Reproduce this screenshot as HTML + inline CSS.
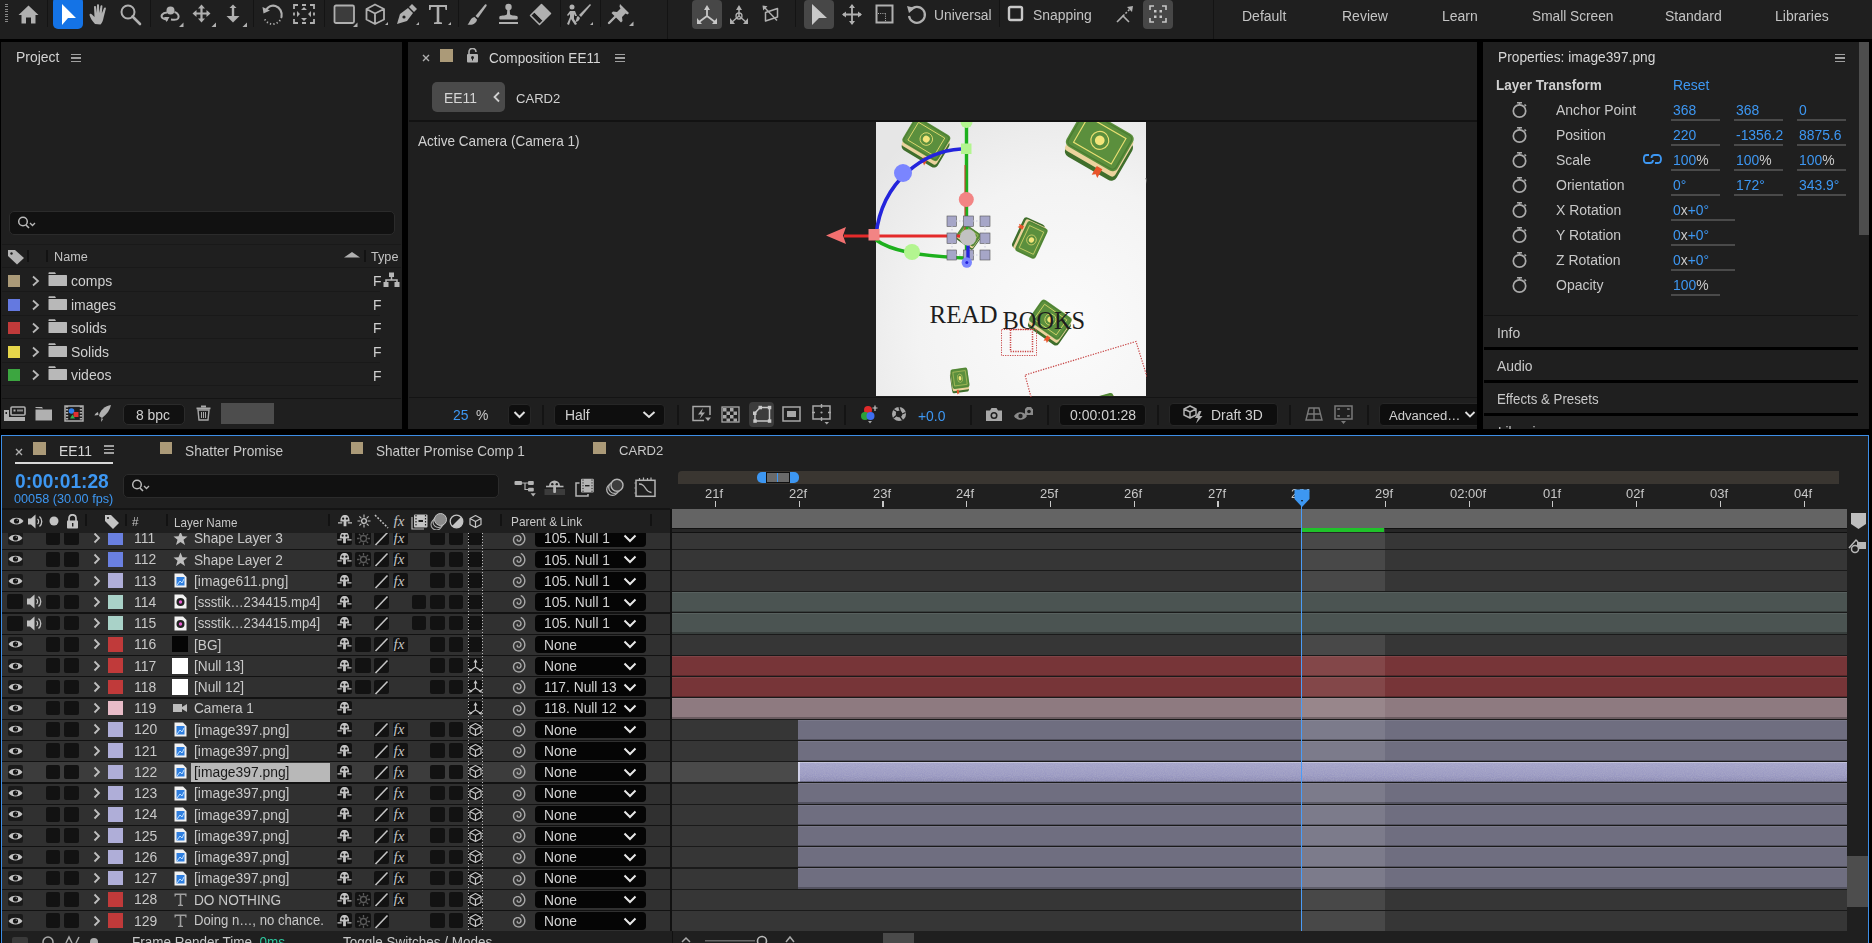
<!DOCTYPE html><html><head><meta charset="utf-8"><style>
html,body{margin:0;padding:0;width:1872px;height:943px;overflow:hidden;background:#000;}
body{position:relative;font-family:"Liberation Sans",sans-serif;}
div,span,svg{position:absolute;box-sizing:border-box;}
.t{white-space:pre;}
</style></head><body>
<div style="left:0px;top:0px;width:1872px;height:39px;background:#1f1f1f;"></div>
<div style="left:1px;top:42px;width:401px;height:387px;background:#1f1f1f;"></div>
<div style="left:408px;top:42px;width:1069px;height:387px;background:#1f1f1f;"></div>
<div style="left:1483px;top:42px;width:386px;height:387px;background:#1f1f1f;"></div>
<div style="left:1px;top:435px;width:1868px;height:508px;background:#1f1f1f;border:1px solid #3d8ee6;border-bottom:none"></div>
<div style="left:5px;top:4px;width:3px;height:19px;background:repeating-linear-gradient(#888 0 1px,transparent 1px 2.5px)"></div>
<svg style="left:18px;top:5px;" width="21" height="19" viewBox="0 0 21 19"><path d="M10.5 0.5 L20.5 10 L17.5 10 L17.5 18.5 L13 18.5 L13 12.5 L8 12.5 L8 18.5 L3.5 18.5 L3.5 10 L0.5 10 Z" fill="#b0b0b0"/></svg>
<div style="left:47px;top:0px;width:1px;height:27px;background:#141414;"></div>
<div style="left:53px;top:-3px;width:30px;height:32px;background:#1473e6;border-radius:5px"></div>
<svg style="left:61px;top:4px;" width="16" height="21" viewBox="0 0 16 21"><path d="M1 0 L15 14 L7 14 L1 21 Z" fill="#fff"/></svg>
<svg style="left:89px;top:4px;" width="21" height="21" viewBox="0 0 21 21"><path d="M6 20 C3 17 1 13 0.5 11 C0.5 9.5 2 9.5 3 10.5 L5.5 13 L5 3 C5 1.8 7 1.8 7 3 L7.5 9 L8 1.2 C8 0 10 0 10 1.2 L10.3 9 L11.5 2 C11.8 0.8 13.6 1 13.4 2.3 L12.8 9.5 L15 4 C15.5 3 17.2 3.4 16.9 4.6 L14.5 14 C14 17 13 19 11.5 20.5 Z" fill="#b0b0b0"/></svg>
<svg style="left:120px;top:4px;" width="22" height="22" viewBox="0 0 22 22"><circle cx="8" cy="8" r="6.5" fill="none" stroke="#b0b0b0" stroke-width="2"/><path d="M12.5 12.5 L20 20" stroke="#b0b0b0" stroke-width="2.6" stroke-linecap="round"/></svg>
<div style="left:150px;top:0px;width:1px;height:27px;background:#141414;"></div>
<svg style="left:160px;top:4px;" width="25" height="24" viewBox="0 0 25 24"><circle cx="10.5" cy="6.5" r="4" fill="#b0b0b0"/><path d="M7 8.5 C2 9 0.5 12 2.5 14 C4 15.5 6 15.5 8 15.5 M14.5 8 C18 9 19.5 12 18 14.5 C17 16 14 16 11 15.5" fill="none" stroke="#b0b0b0" stroke-width="2"/><path d="M4 13 L9.5 13 L6.5 18Z" fill="#b0b0b0"/><path d="M19 23 L23.5 18.5 L23.5 23Z" fill="#b0b0b0"/></svg>
<svg style="left:192px;top:4px;" width="25" height="23" viewBox="0 0 25 23"><path d="M9.5 4 L9.5 15 M3 9.5 L16 9.5" stroke="#b0b0b0" stroke-width="2.2"/><path d="M6 4.5 L9.5 0.5 L13 4.5Z M6 14.5 L9.5 18.5 L13 14.5Z M4.5 6 L0.5 9.5 L4.5 13Z M14.5 6 L18.5 9.5 L14.5 13Z" fill="#b0b0b0"/><path d="M19.5 23 L24 18.5 L24 23Z" fill="#b0b0b0"/></svg>
<svg style="left:225px;top:4px;" width="22" height="23" viewBox="0 0 22 23"><path d="M8 3 L8 13" stroke="#b0b0b0" stroke-width="2.4"/><path d="M4.5 4 L8 0.5 L11.5 4Z" fill="#b0b0b0"/><path d="M1.5 12 L14.5 12 L8 18.5Z" fill="#b0b0b0"/><path d="M17.5 23 L22 18.5 L22 23Z" fill="#b0b0b0"/></svg>
<div style="left:253px;top:0px;width:1px;height:27px;background:#141414;"></div>
<svg style="left:262px;top:4px;" width="22" height="22" viewBox="0 0 22 22"><path d="M4 6 C6 2.5 10 1 13.5 2 C18 3.5 20.5 8 19.5 13" fill="none" stroke="#b0b0b0" stroke-width="2.2"/><path d="M19.5 13 C18.5 17.5 14 20.5 9.5 20 C6 19.5 3.5 17 2 14" fill="none" stroke="#b0b0b0" stroke-width="1.8" stroke-dasharray="1.2 2.2"/><path d="M0.5 3 L8 6.5 L1.5 9.5Z" fill="#b0b0b0"/></svg>
<svg style="left:293px;top:4px;" width="23" height="21" viewBox="0 0 23 21"><path d="M1 5 L1 1 L5 1 M9 1 L13 1 M17 1 L21 1 L21 5 M21 8.5 L21 11.5 M21 15 L21 19 L17 19 M13 19 L9 19 M5 19 L1 19 L1 15 M1 8.5 L1 11.5" fill="none" stroke="#b0b0b0" stroke-width="1.8"/><path d="M8 6 L11 3 L14 6Z M8 14 L11 17 L14 14Z M4 7 L4 13 L7 10Z M18 7 L18 13 L15 10Z" fill="#b0b0b0"/></svg>
<div style="left:324px;top:0px;width:1px;height:27px;background:#141414;"></div>
<svg style="left:333px;top:4px;" width="25" height="23" viewBox="0 0 25 23"><rect x="1.5" y="1.5" width="19.5" height="17.5" rx="1.5" fill="#3c3c3c" stroke="#b0b0b0" stroke-width="1.8"/><path d="M20 23 L24.5 18.5 L24.5 23Z" fill="#b0b0b0"/></svg>
<svg style="left:365px;top:3px;" width="24" height="24" viewBox="0 0 24 24"><path d="M10 1.5 L19 6 L19 16.5 L10 21 L1.5 16.5 L1.5 6 Z M1.5 6 L10 10.5 L19 6 M10 10.5 L10 21" fill="none" stroke="#b0b0b0" stroke-width="1.8" stroke-linejoin="round"/><path d="M20 22 L23 19 L23 22Z" fill="#b0b0b0"/></svg>
<svg style="left:396px;top:3px;" width="24" height="24" viewBox="0 0 24 24"><path d="M1 21 L4 11 L12 5 L17 10 L11 18 Z" fill="#b0b0b0"/><path d="M13 4 L16 1 L21 6 L18 9 Z" fill="#b0b0b0"/><circle cx="8" cy="14" r="1.6" fill="#1f1f1f"/><path d="M20 22 L23 19 L23 22Z" fill="#b0b0b0"/></svg>
<svg style="left:428px;top:3px;" width="24" height="24" viewBox="0 0 24 24"><path d="M1 2 L19 2 L19 7 L17.5 7 L17 4 L11.3 4 L11.3 19 L14 19.5 L14 21 L6 21 L6 19.5 L8.7 19 L8.7 4 L3 4 L2.5 7 L1 7 Z" fill="#b0b0b0"/><path d="M20 22 L23 19 L23 22Z" fill="#b0b0b0"/></svg>
<div style="left:458px;top:0px;width:1px;height:27px;background:#141414;"></div>
<svg style="left:466px;top:3px;" width="22" height="24" viewBox="0 0 22 24"><path d="M19 1.5 C20.5 1 21 2 20.5 3 L12 15 L9.5 13 Z" fill="#b0b0b0"/><path d="M8.5 14 L11 16.5 C10.5 20.5 6.5 22.5 1.5 21.5 C4 19.5 4 15 8.5 14Z" fill="#b0b0b0"/></svg>
<svg style="left:497px;top:3px;" width="25" height="24" viewBox="0 0 25 24"><circle cx="11.5" cy="4" r="3.2" fill="#b0b0b0"/><path d="M10.3 6 L12.7 6 L13 11 C13 12 16 12.5 20 13 C21 13.2 21 16.5 20 16.5 L3 16.5 C2 16.5 2 13.2 3 13 C7 12.5 10 12 10 11 Z" fill="#b0b0b0"/><rect x="2" y="19" width="19" height="2" fill="#b0b0b0"/></svg>
<svg style="left:529px;top:3px;" width="24" height="24" viewBox="0 0 24 24"><path d="M12.5 1.5 L21.5 10.5 L14.5 17.5 L5.5 8.5 Z" fill="#b0b0b0" stroke="#b0b0b0" stroke-width="1.5" stroke-linejoin="round"/><path d="M5.5 8.5 L14.5 17.5 L10.5 21.5 L1.5 12.5 Z" fill="none" stroke="#b0b0b0" stroke-width="1.5" stroke-linejoin="round"/></svg>
<div style="left:560px;top:0px;width:1px;height:27px;background:#141414;"></div>
<svg style="left:567px;top:3px;" width="27" height="24" viewBox="0 0 27 24"><circle cx="5" cy="4" r="2.5" fill="#b0b0b0"/><path d="M3 8 L8 8 L10 13 L8 13 L7 11 L7 16 L10 21 L8 22 L4 16 L2 22 L0 21 L3 14 L3 11 L1 13 L0 12 Z" fill="#b0b0b0"/><path d="M23 1 L24 2 L14 14 L12 12 Z" fill="#b0b0b0"/><path d="M11 13 L13 15 C12 18 10 19 8 19 C10 17 9 14 11 13Z" fill="#b0b0b0"/><path d="M23 22 L26 19 L26 22Z" fill="#b0b0b0"/></svg>
<div style="left:600px;top:0px;width:1px;height:27px;background:#141414;"></div>
<svg style="left:607px;top:3px;" width="27" height="24" viewBox="0 0 27 24"><path d="M13 1 L22 10 L20.5 11.5 L18.5 10.5 L15 14 L15.5 18 L14 19.5 L4.5 10 L6 8.5 L10 9 L13.5 5.5 L12.5 3.5 Z" fill="#b0b0b0"/><path d="M8 14 L2 20" stroke="#b0b0b0" stroke-width="2.4" stroke-linecap="round"/><path d="M22 23 L26.5 18.5 L26.5 23Z" fill="#b0b0b0"/></svg>
<div style="left:667px;top:0px;width:1px;height:39px;background:#141414;"></div>
<div style="left:692px;top:0px;width:30px;height:29px;background:#474747;border-radius:4px"></div>
<svg style="left:696px;top:5px;" width="22" height="20" viewBox="0 0 22 20"><path d="M11 2 L11 11 L3 17 M11 11 L19 17" fill="none" stroke="#c8c8c8" stroke-width="1.8"/><path d="M8 5 L11 0 L14 5Z M1 13 L1 19 L6 19Z M21 13 L21 19 L16 19Z" fill="#c8c8c8"/></svg>
<svg style="left:729px;top:5px;" width="20" height="20" viewBox="0 0 20 20"><path d="M10 2 L10 11 L3 17 M10 11 L17 17" fill="none" stroke="#b0b0b0" stroke-width="1.5"/><circle cx="10" cy="11" r="3" fill="none" stroke="#b0b0b0" stroke-width="1.3"/><path d="M7 5 L10 0 L13 5Z M1 13 L1 19 L6 19Z M19 13 L19 19 L14 19Z" fill="#b0b0b0"/></svg>
<svg style="left:762px;top:5px;" width="20" height="20" viewBox="0 0 20 20"><path d="M3.5 7.5 L15.5 3.5 L15.5 12 L3.5 16 Z" fill="none" stroke="#b0b0b0" stroke-width="1.5" stroke-linejoin="round"/><path d="M2.5 2.5 L15 15.5" stroke="#b0b0b0" stroke-width="1.4"/><path d="M0.5 0.5 L5.5 1.2 L1.2 5.5 Z" fill="#b0b0b0"/></svg>
<div style="left:795px;top:0px;width:1px;height:27px;background:#141414;"></div>
<div style="left:804px;top:0px;width:30px;height:29px;background:#474747;border-radius:4px"></div>
<svg style="left:811px;top:4px;" width="18" height="21" viewBox="0 0 18 21"><path d="M1 0 L16 14 L8 14 L1 21 Z" fill="#c8c8c8"/></svg>
<svg style="left:842px;top:4px;" width="20" height="21" viewBox="0 0 20 21"><path d="M10 1 L10 20 M1 10.5 L19 10.5" stroke="#b0b0b0" stroke-width="1.8"/><path d="M7 4 L10 0 L13 4Z M7 17 L10 21 L13 17Z M4 7.5 L0 10.5 L4 13.5Z M16 7.5 L20 10.5 L16 13.5Z" fill="#b0b0b0"/></svg>
<svg style="left:875px;top:4px;" width="20" height="21" viewBox="0 0 20 21"><rect x="1.5" y="1.5" width="16" height="17" fill="none" stroke="#b0b0b0" stroke-width="2"/><path d="M3 9.5 L10.5 9.5 M10.5 9.5 L10.5 18" stroke="#b0b0b0" stroke-width="1" stroke-dasharray="1 1.2"/></svg>
<svg style="left:906px;top:4px;" width="22" height="21" viewBox="0 0 22 21"><path d="M4.5 6 A8 8 0 1 1 3 12" fill="none" stroke="#b0b0b0" stroke-width="2.2"/><path d="M1 2 L9 4 L3 9Z" fill="#b0b0b0"/></svg>
<span class="t" style="left:933.70px;top:7.80px;font-size:14.41px;line-height:14.41px;color:#c4c4c4;transform:scaleX(0.9579);transform-origin:0 0;">Universal</span>
<div style="left:999px;top:0px;width:1px;height:27px;background:#141414;"></div>
<svg style="left:1007px;top:5px;" width="18" height="18" viewBox="0 0 18 18"><rect x="2" y="2" width="13" height="13" rx="1.5" fill="none" stroke="#c8c8c8" stroke-width="2.4"/></svg>
<span class="t" style="left:1033.20px;top:7.71px;font-size:14.52px;line-height:14.52px;color:#c4c4c4;transform:scaleX(0.9579);transform-origin:0 0;">Snapping</span>
<svg style="left:1116px;top:5px;" width="18" height="19" viewBox="0 0 18 19"><path d="M1 17 L7 11 L13 17" fill="none" stroke="#b0b0b0" stroke-width="1.6"/><path d="M7 11 L14 4" stroke="#b0b0b0" stroke-width="1.5" stroke-dasharray="2 1.5"/><path d="M11 2 L17 1 L16 7Z" fill="#b0b0b0"/></svg>
<div style="left:1143px;top:0px;width:30px;height:29px;background:#474747;border-radius:4px"></div>
<svg style="left:1149px;top:5px;" width="18" height="18" viewBox="0 0 18 18"><path d="M1 5 L1 1 L5 1 M13 1 L17 1 L17 5 M17 13 L17 17 L13 17 M5 17 L1 17 L1 13" fill="none" stroke="#c8c8c8" stroke-width="1.6"/><rect x="5" y="5" width="2.5" height="2.5" fill="#c8c8c8"/><rect x="10.5" y="5" width="2.5" height="2.5" fill="#c8c8c8"/><rect x="5" y="10.5" width="2.5" height="2.5" fill="#c8c8c8"/><rect x="10.5" y="10.5" width="2.5" height="2.5" fill="#c8c8c8"/></svg>
<div style="left:1213px;top:0px;width:1px;height:39px;background:#141414;"></div>
<span class="t" style="left:1241.90px;top:9.02px;font-size:14.62px;line-height:14.62px;color:#c4c4c4;transform:scaleX(0.9579);transform-origin:0 0;">Default</span>
<span class="t" style="left:1341.60px;top:9.02px;font-size:14.62px;line-height:14.62px;color:#c4c4c4;transform:scaleX(0.9579);transform-origin:0 0;">Review</span>
<span class="t" style="left:1441.70px;top:9.02px;font-size:14.62px;line-height:14.62px;color:#c4c4c4;transform:scaleX(0.9579);transform-origin:0 0;">Learn</span>
<span class="t" style="left:1531.60px;top:9.29px;font-size:14.30px;line-height:14.30px;color:#c4c4c4;transform:scaleX(0.9579);transform-origin:0 0;">Small Screen</span>
<span class="t" style="left:1665.20px;top:9.02px;font-size:14.62px;line-height:14.62px;color:#c4c4c4;transform:scaleX(0.9579);transform-origin:0 0;">Standard</span>
<span class="t" style="left:1775.20px;top:9.02px;font-size:14.62px;line-height:14.62px;color:#c4c4c4;transform:scaleX(0.9579);transform-origin:0 0;">Libraries</span>
<span class="t" style="left:15.70px;top:50.11px;font-size:14.52px;line-height:14.52px;color:#d2d2d2;transform:scaleX(0.9579);transform-origin:0 0;">Project</span>
<div style="left:71px;top:53.5px;width:10px;height:1.6px;background:#a0a0a0;"></div>
<div style="left:71px;top:57.1px;width:10px;height:1.6px;background:#a0a0a0;"></div>
<div style="left:71px;top:60.7px;width:10px;height:1.6px;background:#a0a0a0;"></div>
<div style="left:9px;top:211px;width:386px;height:24px;background:#111;border:1px solid #2b2b2b;border-radius:5px"></div>
<svg style="left:17px;top:216px;" width="22" height="14" viewBox="0 0 22 14"><circle cx="6" cy="5.5" r="4.3" fill="none" stroke="#b8b8b8" stroke-width="1.5"/><path d="M9 9 L12 12" stroke="#b8b8b8" stroke-width="1.6"/><path d="M13 7 L15.5 9.5 L18 7" fill="none" stroke="#b8b8b8" stroke-width="1.3"/></svg>
<div style="left:2px;top:244px;width:399px;height:1px;background:#191919;"></div>
<div style="left:2px;top:267px;width:399px;height:1px;background:#191919;"></div>
<svg style="left:7px;top:249px;" width="18" height="16" viewBox="0 0 18 16"><path d="M1 1 L8 1 L17 9 L10 15.5 L1 7 Z" fill="#b4b4b4"/><circle cx="4.5" cy="4.5" r="1.2" fill="#1f1f1f"/></svg>
<div style="left:27px;top:250px;width:2px;height:12px;background:#121212;"></div>
<div style="left:46px;top:250px;width:2px;height:12px;background:#121212;"></div>
<span class="t" style="left:53.70px;top:249.70px;font-size:13.23px;line-height:13.23px;color:#c4c4c4;transform:scaleX(0.9579);transform-origin:0 0;">Name</span>
<svg style="left:344px;top:252px;" width="16" height="6" viewBox="0 0 16 6"><path d="M0 5.5 L8 0 L16 5.5Z" fill="#b0b0b0"/></svg>
<div style="left:364px;top:250px;width:2px;height:12px;background:#121212;"></div>
<span class="t" style="left:371.20px;top:249.70px;font-size:13.23px;line-height:13.23px;color:#c4c4c4;transform:scaleX(0.9579);transform-origin:0 0;">Type</span>
<div style="left:8px;top:275.0px;width:12px;height:12px;background:#ab9a78;"></div>
<svg style="left:31px;top:275.0px;" width="9" height="12" viewBox="0 0 9 12"><path d="M2 1.5 L7 6 L2 10.5" fill="none" stroke="#b8b8b8" stroke-width="1.8"/></svg>
<svg style="left:48px;top:272.0px;" width="20" height="14" viewBox="0 0 20 14"><path d="M0.5 2 L0.5 1 C0.5 0.5 1 0.3 1.5 0.3 L7 0.3 L8 2 Z" fill="#b8b8b8"/><rect x="0.5" y="3" width="18.5" height="11" rx="0.5" fill="#b8b8b8"/></svg>
<span class="t" style="left:71.20px;top:274.02px;font-size:14.62px;line-height:14.62px;color:#cfcfcf;transform:scaleX(0.9579);transform-origin:0 0;">comps</span>
<span class="t" style="left:372.70px;top:274.11px;font-size:14.52px;line-height:14.52px;color:#cfcfcf;transform:scaleX(0.9579);transform-origin:0 0;">F</span>
<div style="left:2px;top:291px;width:378px;height:1px;background:#191919;"></div>
<div style="left:8px;top:298.6px;width:12px;height:12px;background:#6479e0;"></div>
<svg style="left:31px;top:298.6px;" width="9" height="12" viewBox="0 0 9 12"><path d="M2 1.5 L7 6 L2 10.5" fill="none" stroke="#b8b8b8" stroke-width="1.8"/></svg>
<svg style="left:48px;top:295.6px;" width="20" height="14" viewBox="0 0 20 14"><path d="M0.5 2 L0.5 1 C0.5 0.5 1 0.3 1.5 0.3 L7 0.3 L8 2 Z" fill="#b8b8b8"/><rect x="0.5" y="3" width="18.5" height="11" rx="0.5" fill="#b8b8b8"/></svg>
<span class="t" style="left:71.20px;top:297.62px;font-size:14.62px;line-height:14.62px;color:#cfcfcf;transform:scaleX(0.9579);transform-origin:0 0;">images</span>
<span class="t" style="left:372.70px;top:297.71px;font-size:14.52px;line-height:14.52px;color:#cfcfcf;transform:scaleX(0.9579);transform-origin:0 0;">F</span>
<div style="left:2px;top:315px;width:378px;height:1px;background:#191919;"></div>
<div style="left:8px;top:322.2px;width:12px;height:12px;background:#c03a3a;"></div>
<svg style="left:31px;top:322.2px;" width="9" height="12" viewBox="0 0 9 12"><path d="M2 1.5 L7 6 L2 10.5" fill="none" stroke="#b8b8b8" stroke-width="1.8"/></svg>
<svg style="left:48px;top:319.2px;" width="20" height="14" viewBox="0 0 20 14"><path d="M0.5 2 L0.5 1 C0.5 0.5 1 0.3 1.5 0.3 L7 0.3 L8 2 Z" fill="#b8b8b8"/><rect x="0.5" y="3" width="18.5" height="11" rx="0.5" fill="#b8b8b8"/></svg>
<span class="t" style="left:71.20px;top:321.22px;font-size:14.62px;line-height:14.62px;color:#cfcfcf;transform:scaleX(0.9579);transform-origin:0 0;">solids</span>
<span class="t" style="left:372.70px;top:321.31px;font-size:14.52px;line-height:14.52px;color:#cfcfcf;transform:scaleX(0.9579);transform-origin:0 0;">F</span>
<div style="left:2px;top:338px;width:378px;height:1px;background:#191919;"></div>
<div style="left:8px;top:345.8px;width:12px;height:12px;background:#e6d64a;"></div>
<svg style="left:31px;top:345.8px;" width="9" height="12" viewBox="0 0 9 12"><path d="M2 1.5 L7 6 L2 10.5" fill="none" stroke="#b8b8b8" stroke-width="1.8"/></svg>
<svg style="left:48px;top:342.8px;" width="20" height="14" viewBox="0 0 20 14"><path d="M0.5 2 L0.5 1 C0.5 0.5 1 0.3 1.5 0.3 L7 0.3 L8 2 Z" fill="#b8b8b8"/><rect x="0.5" y="3" width="18.5" height="11" rx="0.5" fill="#b8b8b8"/></svg>
<span class="t" style="left:71.20px;top:344.82px;font-size:14.62px;line-height:14.62px;color:#cfcfcf;transform:scaleX(0.9579);transform-origin:0 0;">Solids</span>
<span class="t" style="left:372.70px;top:344.91px;font-size:14.52px;line-height:14.52px;color:#cfcfcf;transform:scaleX(0.9579);transform-origin:0 0;">F</span>
<div style="left:2px;top:362px;width:378px;height:1px;background:#191919;"></div>
<div style="left:8px;top:369.4px;width:12px;height:12px;background:#3ca640;"></div>
<svg style="left:31px;top:369.4px;" width="9" height="12" viewBox="0 0 9 12"><path d="M2 1.5 L7 6 L2 10.5" fill="none" stroke="#b8b8b8" stroke-width="1.8"/></svg>
<svg style="left:48px;top:366.4px;" width="20" height="14" viewBox="0 0 20 14"><path d="M0.5 2 L0.5 1 C0.5 0.5 1 0.3 1.5 0.3 L7 0.3 L8 2 Z" fill="#b8b8b8"/><rect x="0.5" y="3" width="18.5" height="11" rx="0.5" fill="#b8b8b8"/></svg>
<span class="t" style="left:71.20px;top:368.42px;font-size:14.62px;line-height:14.62px;color:#cfcfcf;transform:scaleX(0.9579);transform-origin:0 0;">videos</span>
<span class="t" style="left:372.70px;top:368.51px;font-size:14.52px;line-height:14.52px;color:#cfcfcf;transform:scaleX(0.9579);transform-origin:0 0;">F</span>
<div style="left:2px;top:385px;width:378px;height:1px;background:#191919;"></div>
<svg style="left:383px;top:272px;" width="17" height="16" viewBox="0 0 17 16"><rect x="6" y="0.5" width="5" height="4.5" fill="#b8b8b8"/><path d="M8.5 5 L8.5 8 M3 11 L3 8 L14 8 L14 11" fill="none" stroke="#b8b8b8" stroke-width="1.5"/><rect x="0.5" y="10" width="5" height="5" fill="#b8b8b8"/><rect x="11.5" y="10" width="5" height="5" fill="#b8b8b8"/></svg>
<div style="left:2px;top:398px;width:399px;height:1px;background:#141414;"></div>
<svg style="left:3px;top:406px;" width="23" height="17" viewBox="0 0 23 17"><rect x="8" y="1" width="14" height="8" rx="1" fill="none" stroke="#b0b0b0" stroke-width="1.6"/><rect x="10.5" y="3.5" width="2" height="2" fill="#b0b0b0"/><rect x="14" y="3.5" width="6" height="2" fill="#888"/><path d="M1 4 L6 4 L6 11 L22 11 L22 15 L1 15 Z" fill="#b0b0b0"/><rect x="2.5" y="6" width="1.5" height="2" fill="#1f1f1f"/></svg>
<svg style="left:35px;top:406px;" width="18" height="15" viewBox="0 0 18 15"><path d="M0.5 2 L0.5 1 L7 1 L8 2.5 Z" fill="#b0b0b0"/><rect x="0.5" y="3.5" width="16.5" height="11" fill="#b0b0b0"/></svg>
<svg style="left:64px;top:405px;" width="20" height="17" viewBox="0 0 20 17"><rect x="1" y="1" width="18" height="15" fill="none" stroke="#b0b0b0" stroke-width="1.5"/><path d="M3 1 L3 16 M17 1 L17 16" stroke="#b0b0b0" stroke-width="2.4" stroke-dasharray="1.5 1.5"/><circle cx="7.5" cy="6" r="2.8" fill="#2f7ff0"/><rect x="9.5" y="7" width="5" height="5" fill="#e03030"/><path d="M6 13.5 L8.5 9.5 L11 13.5Z" fill="#30b050"/></svg>
<svg style="left:94px;top:404px;" width="18" height="19" viewBox="0 0 18 19"><path d="M17 1 C11 2 6 6 5 12 L8 14 C13 10 16 6 17 1Z" fill="#b0b0b0"/><path d="M4 8 C2 9 1 10 0.5 11.5 L4.5 11 Z M9 15 C8.5 16 8 17 7 18 L7.5 14Z" fill="#b0b0b0"/></svg>
<div style="left:123px;top:404px;width:62px;height:21px;background:#111;border:1px solid #2b2b2b;border-radius:5px"></div>
<span class="t" style="left:136.20px;top:407.61px;font-size:14.52px;line-height:14.52px;color:#cfcfcf;transform:scaleX(0.9579);transform-origin:0 0;">8 bpc</span>
<svg style="left:196px;top:405px;" width="15" height="16" viewBox="0 0 15 16"><rect x="0.5" y="2.5" width="14" height="1.8" fill="#a8a8a8"/><rect x="5" y="0.5" width="5" height="2" fill="#a8a8a8"/><path d="M2 5 L13 5 L12 15 L3 15 Z" fill="none" stroke="#a8a8a8" stroke-width="1.4"/><path d="M5.5 7 L5.5 13 M7.5 7 L7.5 13 M9.5 7 L9.5 13" stroke="#a8a8a8" stroke-width="1"/></svg>
<div style="left:221px;top:403px;width:53px;height:21px;background:#4d4d4d;"></div>
<svg style="left:422px;top:54px;" width="8" height="8" viewBox="0 0 8 8"><path d="M1 1 L7 7 M7 1 L1 7" stroke="#b0b0b0" stroke-width="1.4"/></svg>
<div style="left:440px;top:49px;width:13px;height:13px;background:#ab9a78;"></div>
<svg style="left:466px;top:48px;" width="13" height="15" viewBox="0 0 13 15"><path d="M3 6 L3 4 C3 1.5 4.5 0.5 6.5 0.5 C8.5 0.5 10 1.5 10 4" fill="none" stroke="#b0b0b0" stroke-width="1.6"/><rect x="1" y="6" width="11" height="8.5" rx="1" fill="#b0b0b0"/><circle cx="6.5" cy="9.5" r="1.5" fill="#1f1f1f"/><rect x="6" y="9.5" width="1" height="3" fill="#1f1f1f"/></svg>
<span class="t" style="left:489.20px;top:50.89px;font-size:14.19px;line-height:14.19px;color:#d6d6d6;transform:scaleX(0.9579);transform-origin:0 0;">Composition EE11</span>
<div style="left:615px;top:53.5px;width:10px;height:1.6px;background:#a0a0a0;"></div>
<div style="left:615px;top:57.1px;width:10px;height:1.6px;background:#a0a0a0;"></div>
<div style="left:615px;top:60.7px;width:10px;height:1.6px;background:#a0a0a0;"></div>
<div style="left:432px;top:82px;width:73px;height:30px;background:#4a4a4a;border-radius:5px"></div>
<span class="t" style="left:444.20px;top:91.11px;font-size:14.52px;line-height:14.52px;color:#d6d6d6;transform:scaleX(0.9579);transform-origin:0 0;">EE11</span>
<svg style="left:493px;top:91px;" width="8" height="12" viewBox="0 0 8 12"><path d="M6 1.5 L1.5 6 L6 10.5" fill="none" stroke="#d0d0d0" stroke-width="1.8"/></svg>
<span class="t" style="left:516.20px;top:91.84px;font-size:13.66px;line-height:13.66px;color:#d0d0d0;transform:scaleX(0.9579);transform-origin:0 0;">CARD2</span>
<div style="left:409px;top:120px;width:1068px;height:1.5px;background:#121212;"></div>
<span class="t" style="left:417.90px;top:134.39px;font-size:14.19px;line-height:14.19px;color:#d0d0d0;transform:scaleX(0.9579);transform-origin:0 0;">Active Camera (Camera 1)</span>
<div style="left:409px;top:397px;width:1068px;height:1px;background:#141414;"></div>
<span class="t" style="left:453.20px;top:408.11px;font-size:14.52px;line-height:14.52px;color:#3d97f2;transform:scaleX(0.9579);transform-origin:0 0;">25</span>
<span class="t" style="left:475.70px;top:408.11px;font-size:14.52px;line-height:14.52px;color:#c8c8c8;transform:scaleX(0.9579);transform-origin:0 0;">%</span>
<div style="left:508px;top:404px;width:23px;height:22px;background:#0e0e0e;border:1px solid #262626;border-radius:4px"></div>
<svg style="left:513px;top:410px;" width="13" height="9" viewBox="0 0 13 9"><path d="M1.5 2 L6.5 7 L11.5 2" fill="none" stroke="#e0e0e0" stroke-width="2"/></svg>
<div style="left:542px;top:405px;width:2px;height:20px;background:#141414;"></div>
<div style="left:554px;top:404px;width:111px;height:22px;background:#0e0e0e;border:1px solid #262626;border-radius:4px"></div>
<span class="t" style="left:564.70px;top:408.11px;font-size:14.52px;line-height:14.52px;color:#d0d0d0;transform:scaleX(0.9579);transform-origin:0 0;">Half</span>
<svg style="left:642px;top:410px;" width="14" height="9" viewBox="0 0 14 9"><path d="M1.5 2 L7 7 L12.5 2" fill="none" stroke="#e0e0e0" stroke-width="2"/></svg>
<div style="left:677px;top:405px;width:2px;height:20px;background:#141414;"></div>
<svg style="left:692px;top:405px;" width="20" height="19" viewBox="0 0 20 19"><path d="M12 15.5 L1 15.5 L1 1.5 L18 1.5 L18 10" fill="none" stroke="#a8a8a8" stroke-width="1.5"/><path d="M11 3 L6 9.5 L9.5 9.5 L7.5 14 L13 7.5 L9.5 7.5 Z" fill="#a8a8a8"/><path d="M13 12.5 L19 12.5 L16 16Z" fill="#a8a8a8"/></svg>
<svg style="left:721px;top:406px;" width="20" height="17" viewBox="0 0 20 17"><rect x="1" y="1" width="17" height="15" fill="none" stroke="#a8a8a8" stroke-width="1.3"/><path d="M2 2 h3.5 v3.5 h-3.5z M9 2 h3.5 v3.5 h-3.5z M5.5 5.5 h3.5 v3.5 h-3.5z M12.5 5.5 h3.5 v3.5 h-3.5z M2 9 h3.5 v3.5 h-3.5z M9 9 h3.5 v3.5 h-3.5z M5.5 12.5 h3.5 v3 h-3.5z M12.5 12.5 h3.5 v3 h-3.5z" fill="#a8a8a8"/></svg>
<div style="left:749px;top:402px;width:25px;height:25px;background:#3c3c3c;border-radius:4px"></div>
<svg style="left:752px;top:405px;" width="21" height="19" viewBox="0 0 21 19"><path d="M3 8 L8 2.5 L17.5 2.5 L17.5 16 L3 16 Z" fill="none" stroke="#c8c8c8" stroke-width="1.5"/><rect x="1" y="6.5" width="3.5" height="3.5" fill="#c8c8c8"/><rect x="6.5" y="0.8" width="3.5" height="3.5" fill="#c8c8c8"/><rect x="15.8" y="0.8" width="3.5" height="3.5" fill="#c8c8c8"/><rect x="1.3" y="14.3" width="3.5" height="3.5" fill="#c8c8c8"/><rect x="15.8" y="14.3" width="3.5" height="3.5" fill="#c8c8c8"/></svg>
<svg style="left:782px;top:406px;" width="19" height="17" viewBox="0 0 19 17"><rect x="1" y="1" width="17" height="14" fill="none" stroke="#a8a8a8" stroke-width="1.5"/><rect x="5" y="5" width="9" height="6" fill="#a8a8a8"/></svg>
<svg style="left:812px;top:404px;" width="19" height="22" viewBox="0 0 19 22"><rect x="1" y="2" width="17" height="13" fill="none" stroke="#a8a8a8" stroke-width="1.5"/><path d="M9.5 0 L9.5 4 M9.5 13 L9.5 17 M0 8.5 L3 8.5 M16 8.5 L19 8.5" stroke="#a8a8a8" stroke-width="1.4"/><circle cx="9.5" cy="8.5" r="1.1" fill="#a8a8a8"/><path d="M12.5 18 L17 18 L14.75 20.5Z" fill="#a8a8a8"/></svg>
<div style="left:844px;top:405px;width:2px;height:20px;background:#141414;"></div>
<svg style="left:860px;top:405px;" width="19" height="20" viewBox="0 0 19 20"><circle cx="8" cy="5" r="4" fill="#e02a2a"/><circle cx="5" cy="11" r="4" fill="#2ca03a"/><circle cx="10.5" cy="11" r="4" fill="#3f6ef0"/><path d="M15 0.5 L15 6 M12.5 3 L17.5 3" stroke="#c8c8c8" stroke-width="1.2"/><path d="M8 16 L12 16 L10 18.5Z" fill="#a8a8a8"/></svg>
<svg style="left:891px;top:406px;" width="16" height="16" viewBox="0 0 16 16"><circle cx="8" cy="8" r="7" fill="#a8a8a8"/><circle cx="8" cy="8" r="3.2" fill="#1f1f1f"/><path d="M8 1 L9.5 6 M14.5 6.5 L10 8.5 M11.5 14 L8.5 10 M2.5 12 L6 9 M2.5 3.5 L6.5 6" stroke="#1f1f1f" stroke-width="1.3"/></svg>
<span class="t" style="left:918.20px;top:408.61px;font-size:14.52px;line-height:14.52px;color:#3d97f2;transform:scaleX(0.9579);transform-origin:0 0;">+0.0</span>
<div style="left:970px;top:405px;width:2px;height:20px;background:#141414;"></div>
<svg style="left:985px;top:407px;" width="18" height="15" viewBox="0 0 18 15"><path d="M1 3.5 L5 3.5 L6.5 1 L11.5 1 L13 3.5 L17 3.5 L17 14 L1 14 Z" fill="#a8a8a8"/><circle cx="9" cy="8.5" r="3.5" fill="#1f1f1f"/><circle cx="9" cy="8.5" r="2" fill="#a8a8a8"/></svg>
<svg style="left:1013px;top:404px;" width="21" height="19" viewBox="0 0 21 19"><path d="M1 12 C4 7 11 7 14 12 C11 17 4 17 1 12Z" fill="#8a8a8a"/><circle cx="7.5" cy="12" r="2.2" fill="#1f1f1f"/><path d="M12 5 L14 3 L18 3 L19.5 5 L20 5 L20 11 L12 11 Z" fill="#8a8a8a"/><circle cx="16" cy="7.5" r="1.8" fill="#1f1f1f"/></svg>
<div style="left:1047px;top:405px;width:2px;height:20px;background:#141414;"></div>
<div style="left:1059px;top:404px;width:87px;height:22px;background:#0e0e0e;border:1px solid #262626;border-radius:4px"></div>
<span class="t" style="left:1070.20px;top:408.02px;font-size:14.62px;line-height:14.62px;color:#d0d0d0;transform:scaleX(0.9579);transform-origin:0 0;">0:00:01:28</span>
<div style="left:1157px;top:405px;width:2px;height:20px;background:#141414;"></div>
<div style="left:1169px;top:403px;width:109px;height:23px;background:#0e0e0e;border:1px solid #262626;border-radius:4px"></div>
<svg style="left:1183px;top:405px;" width="21" height="19" viewBox="0 0 21 19"><path d="M7 1 L13 4 L13 10 L7 13 L1 10 L1 4 Z M1 4 L7 7 L13 4 M7 7 L7 13" fill="none" stroke="#b0b0b0" stroke-width="1.5" stroke-linejoin="round"/><path d="M16 6 L12 13 L15 13 L13 18.5 L19.5 11 L16.5 11 L18.5 6Z" fill="#b0b0b0"/></svg>
<span class="t" style="left:1210.70px;top:408.11px;font-size:14.52px;line-height:14.52px;color:#d0d0d0;transform:scaleX(0.9579);transform-origin:0 0;">Draft 3D</span>
<div style="left:1289px;top:405px;width:2px;height:20px;background:#141414;"></div>
<svg style="left:1305px;top:407px;" width="18" height="14" viewBox="0 0 18 14"><path d="M4 1 L14 1 L17 13 L1 13 Z M9 1 L9 13 M2.5 7 L15.5 7" fill="none" stroke="#7a7a7a" stroke-width="1.4"/></svg>
<svg style="left:1334px;top:405px;" width="20" height="20" viewBox="0 0 20 20"><rect x="1" y="1" width="17" height="13" fill="none" stroke="#7a7a7a" stroke-width="1.5"/><path d="M4 5 L4 4 L6 4 M13 4 L15 4 L15 5 M15 10 L15 11 L13 11 M6 11 L4 11 L4 10" fill="none" stroke="#7a7a7a" stroke-width="1.3"/><path d="M7 16 L12 16 L9.5 19Z" fill="#7a7a7a"/></svg>
<div style="left:1367px;top:405px;width:2px;height:20px;background:#141414;"></div>
<div style="left:1379px;top:403px;width:110px;height:23px;background:#0e0e0e;border:1px solid #262626;border-radius:4px;clip-path:inset(0 12px 0 0)"></div>
<span class="t" style="left:1389.20px;top:408.84px;font-size:13.66px;line-height:13.66px;color:#d0d0d0;transform:scaleX(0.9579);transform-origin:0 0;">Advanced…</span>
<svg style="left:1464px;top:410px;" width="12" height="9" viewBox="0 0 12 9"><path d="M1.5 2 L6 6.5 L10.5 2" fill="none" stroke="#e0e0e0" stroke-width="1.8"/></svg>
<div style="left:1477px;top:42px;width:6px;height:387px;background:#000;"></div>
<svg style="left:826px;top:122px;" width="321" height="275" viewBox="0 0 321 275"><defs><g id="bk">
<rect x="3" y="6" width="46" height="34" rx="5" fill="#3f6e2c"/>
<rect x="2" y="3.5" width="45" height="33" rx="3" fill="#ecd39e"/>
<rect x="0" y="0" width="46" height="33" rx="4.5" fill="#5b8f3d"/>
<rect x="1.5" y="1.5" width="43" height="30" rx="3.5" fill="none" stroke="#4a7d30" stroke-width="1"/>
<path d="M6 5 L40 5 L40 28 L6 28 Z" fill="none" stroke="#e9df72" stroke-width="0.9"/>
<circle cx="23" cy="16.5" r="7" fill="none" stroke="#e9df72" stroke-width="0.9"/>
<circle cx="23" cy="16.5" r="3.8" fill="#f3e57a"/>
<path d="M31 35 L36 35 L36 43 L33.5 41 L31 43 Z" fill="#e8542a"/>
</g>
<radialGradient id="bgg" cx="0.7" cy="0.75" r="0.9"><stop offset="0" stop-color="#fbfbfb"/><stop offset="0.6" stop-color="#f3f3f3"/><stop offset="1" stop-color="#e6e6e6"/></radialGradient>
<clipPath id="cl"><rect x="50" y="0" width="270" height="274"/></clipPath></defs>
<g clip-path="url(#cl)">
<rect x="50" y="0" width="270" height="274" fill="url(#bgg)"/>
<g transform="translate(-826 -122)">
<use href="#bk" transform="translate(925 143) rotate(31) scale(0.9 0.9) translate(-24 -21)"/>
<use href="#bk" transform="translate(1098 146) rotate(30) scale(1.28 1.28) translate(-24 -21)"/>
<use href="#bk" transform="translate(1029 238) rotate(-65) scale(0.72 -0.68) translate(-24 -21)"/>
<use href="#bk" transform="translate(1049 323) rotate(35) scale(0.8 0.8) translate(-24 -21)"/>
<use href="#bk" transform="translate(960 381) rotate(-8) scale(-0.37 0.6) translate(-24 -21)"/>
<use href="#bk" transform="translate(1103 408) rotate(-15) scale(0.6 0.6) translate(-24 -21)"/>
<use href="#bk" transform="translate(968 237) rotate(35) scale(0.45 0.45) translate(-24 -21)"/>
<text x="929.5" y="322.5" font-family="Liberation Serif" font-size="25" fill="#1e1e1e">READ</text>
<text x="1002.5" y="329" font-family="Liberation Serif" font-size="24.4" fill="#1e1e1e">BOOKS</text>
<rect x="1001.5" y="329.5" width="35" height="26" fill="none" stroke="#c84848" stroke-width="1" stroke-dasharray="1.2 1.2"/>
<rect x="1010.5" y="329.5" width="22" height="22" fill="none" stroke="#c83c3c" stroke-width="1.5" stroke-dasharray="1.2 1.2"/>
</g></g>
<g transform="translate(-826 -122)">
<path d="M1146 178 L1148 186" stroke="#555" stroke-width="1"/>
<path d="M1031 397 L1025 375 L1136 341.5 L1153 396" fill="none" stroke="#c84848" stroke-width="1.2" stroke-dasharray="1.3 1.3"/>
<path d="M966.5 122 L966.5 257" stroke="#1db01d" stroke-width="3.4"/>
<path d="M965 165 L965 236" stroke="#e03030" stroke-width="1"/>
<circle cx="966.5" cy="122" r="6" fill="#b3f590"/>
<rect x="961" y="143.5" width="10.5" height="10.5" fill="#b3f590"/>
<path d="M961 149 C925 151 882 180 876 235" fill="none" stroke="#2424dc" stroke-width="3.6"/>
<circle cx="903" cy="173" r="9" fill="#7a85ff"/>
<circle cx="966.3" cy="199.5" r="7.5" fill="#f28484"/>
<path d="M844 236 L960 236" stroke="#e42a2a" stroke-width="3.2"/>
<path d="M826 235.5 L846 227 L843 235.5 L846 244 Z" fill="#f27070"/>
<path d="M876 240 C890 250 915 256 965 258" fill="none" stroke="#1db01d" stroke-width="3.4"/>
<circle cx="912" cy="252" r="8" fill="#b3f590"/>
<g fill="#a6a6c8" stroke="#555" stroke-width="0.6">
<rect x="947" y="216" width="9.5" height="10.5"/><rect x="963.5" y="216" width="10" height="10.5"/><rect x="980" y="216" width="10" height="10.5"/>
<rect x="947" y="233" width="9.5" height="10.5"/><rect x="980" y="233" width="10" height="10.5"/>
<rect x="947" y="250" width="9.5" height="10"/><rect x="963.5" y="250" width="10" height="10"/><rect x="980" y="250" width="10" height="10"/>
</g>
<path d="M956 221 L963 221 M973 221 L980 221 M956 255 L963 255 M973 255 L980 255 M952 226 L952 233 M952 243 L952 250 M985 226 L985 233 M985 243 L985 250" stroke="#c8c8dc" stroke-width="1" stroke-dasharray="1.5 1.5"/>
<path d="M968 237 L968 262" stroke="#2424dc" stroke-width="3.4"/>
<circle cx="966.8" cy="262.5" r="5.2" fill="#7a85ff"/>
<circle cx="966.8" cy="262.5" r="1.5" fill="#2424dc"/>
<circle cx="968" cy="237.5" r="8.2" fill="#c2c2c2"/>
<rect x="868.5" y="229" width="11" height="11.5" fill="#f28484"/>
</g></svg>
<span class="t" style="left:1497.70px;top:50.25px;font-size:14.35px;line-height:14.35px;color:#d6d6d6;transform:scaleX(0.9579);transform-origin:0 0;">Properties: image397.png</span>
<div style="left:1835px;top:53.5px;width:10px;height:1.6px;background:#a0a0a0;"></div>
<div style="left:1835px;top:57.1px;width:10px;height:1.6px;background:#a0a0a0;"></div>
<div style="left:1835px;top:60.7px;width:10px;height:1.6px;background:#a0a0a0;"></div>
<span class="t" style="left:1496.20px;top:78.48px;font-size:14.09px;line-height:14.09px;color:#d0d0d0;transform:scaleX(0.9579);transform-origin:0 0;font-weight:bold">Layer Transform</span>
<span class="t" style="left:1673.20px;top:78.11px;font-size:14.52px;line-height:14.52px;color:#3d97f2;transform:scaleX(0.9579);transform-origin:0 0;">Reset</span>
<svg style="left:1511px;top:101px;" width="18" height="18" viewBox="0 0 18 18"><circle cx="8.5" cy="10" r="6.2" fill="none" stroke="#aaa" stroke-width="1.7"/><path d="M6 1.8 L11 1.8 M8.5 2 L8.5 3.8 M13.5 3.5 L15 5" stroke="#aaa" stroke-width="1.6"/></svg>
<span class="t" style="left:1556.00px;top:103.02px;font-size:14.62px;line-height:14.62px;color:#c8c8c8;transform:scaleX(0.9579);transform-origin:0 0;">Anchor Point</span>
<span class="t" style="left:1673.40px;top:103.11px;font-size:14.52px;line-height:14.52px;color:#3d97f2;transform:scaleX(0.9579);transform-origin:0 0;">368</span>
<div style="left:1671px;top:119px;width:49px;height:1.5px;background:#4a4a4a;"></div>
<span class="t" style="left:1736.40px;top:103.11px;font-size:14.52px;line-height:14.52px;color:#3d97f2;transform:scaleX(0.9579);transform-origin:0 0;">368</span>
<div style="left:1734px;top:119px;width:49px;height:1.5px;background:#4a4a4a;"></div>
<span class="t" style="left:1799.40px;top:103.11px;font-size:14.52px;line-height:14.52px;color:#3d97f2;transform:scaleX(0.9579);transform-origin:0 0;">0</span>
<div style="left:1797px;top:119px;width:49px;height:1.5px;background:#4a4a4a;"></div>
<svg style="left:1511px;top:126px;" width="18" height="18" viewBox="0 0 18 18"><circle cx="8.5" cy="10" r="6.2" fill="none" stroke="#aaa" stroke-width="1.7"/><path d="M6 1.8 L11 1.8 M8.5 2 L8.5 3.8 M13.5 3.5 L15 5" stroke="#aaa" stroke-width="1.6"/></svg>
<span class="t" style="left:1556.00px;top:128.02px;font-size:14.62px;line-height:14.62px;color:#c8c8c8;transform:scaleX(0.9579);transform-origin:0 0;">Position</span>
<span class="t" style="left:1673.40px;top:128.11px;font-size:14.52px;line-height:14.52px;color:#3d97f2;transform:scaleX(0.9579);transform-origin:0 0;">220</span>
<div style="left:1671px;top:144px;width:49px;height:1.5px;background:#4a4a4a;"></div>
<span class="t" style="left:1736.40px;top:128.11px;font-size:14.52px;line-height:14.52px;color:#3d97f2;transform:scaleX(0.9579);transform-origin:0 0;">-1356.2</span>
<div style="left:1734px;top:144px;width:49px;height:1.5px;background:#4a4a4a;"></div>
<span class="t" style="left:1799.40px;top:128.11px;font-size:14.52px;line-height:14.52px;color:#3d97f2;transform:scaleX(0.9579);transform-origin:0 0;">8875.6</span>
<div style="left:1797px;top:144px;width:49px;height:1.5px;background:#4a4a4a;"></div>
<svg style="left:1511px;top:151px;" width="18" height="18" viewBox="0 0 18 18"><circle cx="8.5" cy="10" r="6.2" fill="none" stroke="#aaa" stroke-width="1.7"/><path d="M6 1.8 L11 1.8 M8.5 2 L8.5 3.8 M13.5 3.5 L15 5" stroke="#aaa" stroke-width="1.6"/></svg>
<span class="t" style="left:1556.00px;top:153.02px;font-size:14.62px;line-height:14.62px;color:#c8c8c8;transform:scaleX(0.9579);transform-origin:0 0;">Scale</span>
<span class="t" style="left:1673.40px;top:153.11px;font-size:14.52px;line-height:14.52px;color:#3d97f2;transform:scaleX(0.9579);transform-origin:0 0;">100<span style="position:static;color:#c8c8c8">%</span></span>
<div style="left:1671px;top:169px;width:49px;height:1.5px;background:#4a4a4a;"></div>
<span class="t" style="left:1736.40px;top:153.11px;font-size:14.52px;line-height:14.52px;color:#3d97f2;transform:scaleX(0.9579);transform-origin:0 0;">100<span style="position:static;color:#c8c8c8">%</span></span>
<div style="left:1734px;top:169px;width:49px;height:1.5px;background:#4a4a4a;"></div>
<span class="t" style="left:1799.40px;top:153.11px;font-size:14.52px;line-height:14.52px;color:#3d97f2;transform:scaleX(0.9579);transform-origin:0 0;">100<span style="position:static;color:#c8c8c8">%</span></span>
<div style="left:1797px;top:169px;width:49px;height:1.5px;background:#4a4a4a;"></div>
<svg style="left:1511px;top:176px;" width="18" height="18" viewBox="0 0 18 18"><circle cx="8.5" cy="10" r="6.2" fill="none" stroke="#aaa" stroke-width="1.7"/><path d="M6 1.8 L11 1.8 M8.5 2 L8.5 3.8 M13.5 3.5 L15 5" stroke="#aaa" stroke-width="1.6"/></svg>
<span class="t" style="left:1556.00px;top:178.02px;font-size:14.62px;line-height:14.62px;color:#c8c8c8;transform:scaleX(0.9579);transform-origin:0 0;">Orientation</span>
<span class="t" style="left:1673.40px;top:178.11px;font-size:14.52px;line-height:14.52px;color:#3d97f2;transform:scaleX(0.9579);transform-origin:0 0;">0°</span>
<div style="left:1671px;top:194px;width:49px;height:1.5px;background:#4a4a4a;"></div>
<span class="t" style="left:1736.40px;top:178.11px;font-size:14.52px;line-height:14.52px;color:#3d97f2;transform:scaleX(0.9579);transform-origin:0 0;">172°</span>
<div style="left:1734px;top:194px;width:49px;height:1.5px;background:#4a4a4a;"></div>
<span class="t" style="left:1799.40px;top:178.11px;font-size:14.52px;line-height:14.52px;color:#3d97f2;transform:scaleX(0.9579);transform-origin:0 0;">343.9°</span>
<div style="left:1797px;top:194px;width:49px;height:1.5px;background:#4a4a4a;"></div>
<svg style="left:1511px;top:201px;" width="18" height="18" viewBox="0 0 18 18"><circle cx="8.5" cy="10" r="6.2" fill="none" stroke="#aaa" stroke-width="1.7"/><path d="M6 1.8 L11 1.8 M8.5 2 L8.5 3.8 M13.5 3.5 L15 5" stroke="#aaa" stroke-width="1.6"/></svg>
<span class="t" style="left:1556.00px;top:203.02px;font-size:14.62px;line-height:14.62px;color:#c8c8c8;transform:scaleX(0.9579);transform-origin:0 0;">X Rotation</span>
<span class="t" style="left:1673.40px;top:203.11px;font-size:14.52px;line-height:14.52px;color:#3d97f2;transform:scaleX(0.9579);transform-origin:0 0;">0<span style="position:static;color:#c8c8c8">x</span>+0°</span>
<div style="left:1671px;top:219px;width:64px;height:1.5px;background:#4a4a4a;"></div>
<svg style="left:1511px;top:226px;" width="18" height="18" viewBox="0 0 18 18"><circle cx="8.5" cy="10" r="6.2" fill="none" stroke="#aaa" stroke-width="1.7"/><path d="M6 1.8 L11 1.8 M8.5 2 L8.5 3.8 M13.5 3.5 L15 5" stroke="#aaa" stroke-width="1.6"/></svg>
<span class="t" style="left:1556.00px;top:228.02px;font-size:14.62px;line-height:14.62px;color:#c8c8c8;transform:scaleX(0.9579);transform-origin:0 0;">Y Rotation</span>
<span class="t" style="left:1673.40px;top:228.11px;font-size:14.52px;line-height:14.52px;color:#3d97f2;transform:scaleX(0.9579);transform-origin:0 0;">0<span style="position:static;color:#c8c8c8">x</span>+0°</span>
<div style="left:1671px;top:244px;width:64px;height:1.5px;background:#4a4a4a;"></div>
<svg style="left:1511px;top:251px;" width="18" height="18" viewBox="0 0 18 18"><circle cx="8.5" cy="10" r="6.2" fill="none" stroke="#aaa" stroke-width="1.7"/><path d="M6 1.8 L11 1.8 M8.5 2 L8.5 3.8 M13.5 3.5 L15 5" stroke="#aaa" stroke-width="1.6"/></svg>
<span class="t" style="left:1556.00px;top:253.02px;font-size:14.62px;line-height:14.62px;color:#c8c8c8;transform:scaleX(0.9579);transform-origin:0 0;">Z Rotation</span>
<span class="t" style="left:1673.40px;top:253.11px;font-size:14.52px;line-height:14.52px;color:#3d97f2;transform:scaleX(0.9579);transform-origin:0 0;">0<span style="position:static;color:#c8c8c8">x</span>+0°</span>
<div style="left:1671px;top:269px;width:64px;height:1.5px;background:#4a4a4a;"></div>
<svg style="left:1511px;top:276px;" width="18" height="18" viewBox="0 0 18 18"><circle cx="8.5" cy="10" r="6.2" fill="none" stroke="#aaa" stroke-width="1.7"/><path d="M6 1.8 L11 1.8 M8.5 2 L8.5 3.8 M13.5 3.5 L15 5" stroke="#aaa" stroke-width="1.6"/></svg>
<span class="t" style="left:1556.00px;top:278.02px;font-size:14.62px;line-height:14.62px;color:#c8c8c8;transform:scaleX(0.9579);transform-origin:0 0;">Opacity</span>
<span class="t" style="left:1673.40px;top:278.11px;font-size:14.52px;line-height:14.52px;color:#3d97f2;transform:scaleX(0.9579);transform-origin:0 0;">100<span style="position:static;color:#c8c8c8">%</span></span>
<div style="left:1671px;top:294px;width:49px;height:1.5px;background:#4a4a4a;"></div>
<svg style="left:1643px;top:153px;" width="19" height="12" viewBox="0 0 19 12"><path d="M6 2 L3.5 2 C1.5 2 0.8 4 0.8 6 C0.8 8 1.5 10 3.5 10 L7 10 C9 10 10 8.5 10 7 M12 10 L15 10 C17 10 18 8 18 6 C18 4 17 2 15 2 L11.5 2 C9.5 2 8.5 3.5 8.5 5" fill="none" stroke="#3d97f2" stroke-width="1.8"/></svg>
<div style="left:1859px;top:42px;width:10px;height:193px;background:#4d4d4d;"></div>
<div style="left:1484px;top:315px;width:374px;height:1px;background:#141414;"></div>
<span class="t" style="left:1497.20px;top:326.11px;font-size:14.52px;line-height:14.52px;color:#c8c8c8;transform:scaleX(0.9579);transform-origin:0 0;">Info</span>
<div style="left:1484px;top:347px;width:374px;height:3px;background:#000;"></div>
<span class="t" style="left:1497.20px;top:359.11px;font-size:14.52px;line-height:14.52px;color:#c8c8c8;transform:scaleX(0.9579);transform-origin:0 0;">Audio</span>
<div style="left:1484px;top:380px;width:374px;height:3px;background:#000;"></div>
<span class="t" style="left:1497.20px;top:392.66px;font-size:13.87px;line-height:13.87px;color:#c8c8c8;transform:scaleX(0.9579);transform-origin:0 0;">Effects &amp; Presets</span>
<div style="left:1484px;top:413px;width:374px;height:3px;background:#000;"></div>
<div style="left:1484px;top:416px;width:374px;height:13px;overflow:hidden"><span class="t" style="left:14px;top:8.7px;font-size:14.52px;line-height:14.52px;transform:scaleX(0.93);transform-origin:0 0;color:#c8c8c8">Libraries</span></div>
<div style="left:1483px;top:429px;width:386px;height:6px;background:#000;"></div>
<svg width="0" height="0" style="left:0;top:0"><defs>
<symbol id="eye" viewBox="0 0 15 10"><path d="M0.5 5 C3 0.5 12 0.5 14.5 5 C12 9.5 3 9.5 0.5 5Z" fill="#c4c4c4"/><circle cx="7.5" cy="5" r="2.6" fill="#141414"/><circle cx="8.3" cy="4.2" r="0.7" fill="#888"/></symbol>
<symbol id="spk" viewBox="0 0 17 15"><path d="M1 4.5 L4 4.5 L8.5 0.5 L8.5 14.5 L4 10.5 L1 10.5 Z" fill="#c4c4c4"/><path d="M10.5 5 C12 6 12 9 10.5 10 M12.5 2.5 C15.5 5 15.5 10 12.5 12.5" fill="none" stroke="#c4c4c4" stroke-width="1.3"/></symbol>
<symbol id="chev" viewBox="0 0 8 12"><path d="M1.5 1.5 L6 6 L1.5 10.5" fill="none" stroke="#c0c0c0" stroke-width="1.8"/></symbol>
<symbol id="star" viewBox="0 0 15 15"><path d="M7.5 0.5 L9.5 5.3 L14.5 5.5 L10.5 8.8 L12 14 L7.5 11 L3 14 L4.5 8.8 L0.5 5.5 L5.5 5.3 Z" fill="#bdbdbd"/></symbol>
<symbol id="img" viewBox="0 0 13 15"><path d="M0.5 0.5 L9 0.5 L12.5 4 L12.5 14.5 L0.5 14.5 Z" fill="#f2f2f2"/><path d="M2.5 4 L10.5 4 L10.5 12.5 L2.5 12.5 Z" fill="#2f7fe0"/><path d="M3 12 L6 8 L8 10 L10 6" fill="none" stroke="#bfe0ff" stroke-width="1"/></symbol>
<symbol id="vid" viewBox="0 0 13 15"><path d="M0.5 0.5 L9 0.5 L12.5 4 L12.5 14.5 L0.5 14.5 Z" fill="#f2f2f2"/><circle cx="6.5" cy="8" r="4" fill="#222"/><circle cx="6.5" cy="8" r="1.7" fill="#e85ad0"/></symbol>
<symbol id="shy" viewBox="0 0 16 15"><path d="M3 8 C3 3 5 1 8 1 C11 1 13 3 13 8 L9.5 8 L9.5 13 L6.5 13 L6.5 8 Z" fill="#c4c4c4"/><circle cx="6" cy="5" r="1.2" fill="#141414"/><circle cx="10" cy="5" r="1.2" fill="#141414"/><path d="M0.5 9.5 L5 9.5 M11 9.5 L15.5 9.5" stroke="#c4c4c4" stroke-width="1.3"/></symbol>
<symbol id="sun" viewBox="0 0 15 15"><circle cx="7.5" cy="7.5" r="3" fill="none" stroke="#5a5a5a" stroke-width="1.3"/><path d="M7.5 1 L7.5 3.5 M7.5 11.5 L7.5 14 M1 7.5 L3.5 7.5 M11.5 7.5 L14 7.5 M2.9 2.9 L4.6 4.6 M10.4 10.4 L12.1 12.1 M2.9 12.1 L4.6 10.4 M10.4 4.6 L12.1 2.9" stroke="#5a5a5a" stroke-width="1.3"/></symbol>
<symbol id="qual" viewBox="0 0 15 15"><path d="M1.5 14 L13.5 1.5" stroke="#c4c4c4" stroke-width="1.6"/></symbol>
<symbol id="fx" viewBox="0 0 15 15"><text x="0.5" y="12.5" font-family="Liberation Serif" font-style="italic" font-size="15" fill="#c4c4c4">fx</text></symbol>
<symbol id="cube" viewBox="0 0 15 15"><path d="M7.5 1.5 L13 4.5 L13 10.5 L7.5 13.5 L2 10.5 L2 4.5 Z M2 4.5 L7.5 7.5 L13 4.5 M7.5 7.5 L7.5 13.5" fill="none" stroke="#c4c4c4" stroke-width="1.2" stroke-linejoin="round"/></symbol>
<symbol id="axis" viewBox="0 0 15 15"><path d="M7.5 3 L7.5 9 L3 12 M7.5 9 L12 12" fill="none" stroke="#c4c4c4" stroke-width="1.2"/><path d="M5.5 4.5 L7.5 1 L9.5 4.5Z M1 10 L1.5 14 L4.5 12.5Z M14 10 L13.5 14 L10.5 12.5Z" fill="#c4c4c4"/></symbol>
<symbol id="spir" viewBox="0 0 15 15"><path d="M6.69 7.09 L6.61 7.12 L6.53 7.18 L6.45 7.25 L6.38 7.33 L6.32 7.43 L6.28 7.55 L6.25 7.67 L6.23 7.81 L6.24 7.95 L6.27 8.09 L6.31 8.24 L6.38 8.39 L6.47 8.53 L6.58 8.66 L6.72 8.79 L6.87 8.90 L7.04 8.99 L7.23 9.07 L7.43 9.12 L7.65 9.15 L7.87 9.15 L8.10 9.13 L8.33 9.07 L8.56 8.99 L8.79 8.88 L9.00 8.73 L9.21 8.56 L9.40 8.36 L9.56 8.14 L9.71 7.89 L9.82 7.62 L9.91 7.33 L9.96 7.02 L9.98 6.70 L9.96 6.38 L9.91 6.05 L9.81 5.73 L9.67 5.41 L9.50 5.10 L9.29 4.81 L9.04 4.54 L8.75 4.29 L8.44 4.08 L8.09 3.89 L7.72 3.75 L7.33 3.65 L6.92 3.59 L6.50 3.58 L6.07 3.61 L5.65 3.69 L5.23 3.83 L4.82 4.01 L4.42 4.25 L4.05 4.53 L3.71 4.85 L3.40 5.22 L3.14 5.62 L2.91 6.06 L2.73 6.53 L2.61 7.02 L2.54 7.53 L2.53 8.06 L2.57 8.58 L2.68 9.11 L2.85 9.63 L3.07 10.13 L3.36 10.62 L3.70 11.07 L4.10 11.48 L4.55 11.86 L5.04 12.18 L5.57 12.46 L6.13 12.67 L6.72 12.82 L7.34 12.91 L7.96 12.93 L8.60 12.88 L9.23 12.75 L9.84 12.56 L10.44 12.29 L11.02 11.95 L11.55 11.55 L12.05 11.09 L12.49 10.57 L12.88 9.99 L13.21 9.37 L13.47 8.71 L13.65 8.02 L13.76 7.31 L13.79 6.58 L13.73 5.84 L13.59 5.11 L13.38 4.39 L13.07 3.69 L12.69 3.02 L12.24 2.40 L11.71 1.82 L11.12 1.30 L10.46 0.84 L9.75 0.46" fill="none" stroke="#a8a8a8" stroke-width="1.4"/></symbol>
<symbol id="camr" viewBox="0 0 16 14"><path d="M1 3 L10 3 L10 11 L1 11Z" fill="#bbb"/><path d="M10 6 L15 3 L15 11 L10 8Z" fill="#bbb"/></symbol>
<symbol id="ttl" viewBox="0 0 15 15"><path d="M1.5 1.5 L13.5 1.5 L13.5 4.5 L12.5 4.5 L12 3 L8.3 3 L8.3 12.5 L10 13 L10 14 L5 14 L5 13 L6.7 12.5 L6.7 3 L3 3 L2.5 4.5 L1.5 4.5 Z" fill="#a0a0a0"/></symbol>
</defs></svg>
<svg style="left:15px;top:448px;" width="8" height="8" viewBox="0 0 8 8"><path d="M1 1 L7 7 M7 1 L1 7" stroke="#b0b0b0" stroke-width="1.4"/></svg>
<div style="left:33px;top:442px;width:13px;height:13px;background:#ab9a78;"></div>
<span class="t" style="left:59.20px;top:443.61px;font-size:14.52px;line-height:14.52px;color:#d6d6d6;transform:scaleX(0.9579);transform-origin:0 0;">EE11</span>
<div style="left:103.5px;top:445px;width:10px;height:1.6px;background:#a0a0a0;"></div>
<div style="left:103.5px;top:448.6px;width:10px;height:1.6px;background:#a0a0a0;"></div>
<div style="left:103.5px;top:452.2px;width:10px;height:1.6px;background:#a0a0a0;"></div>
<div style="left:15px;top:462px;width:98px;height:2px;background:#d8d8d8;"></div>
<div style="left:160px;top:442px;width:12px;height:12px;background:#ab9a78;"></div>
<span class="t" style="left:185.20px;top:443.79px;font-size:14.30px;line-height:14.30px;color:#c8c8c8;transform:scaleX(0.9579);transform-origin:0 0;">Shatter Promise</span>
<div style="left:351px;top:442px;width:12px;height:12px;background:#ab9a78;"></div>
<span class="t" style="left:376.20px;top:443.89px;font-size:14.19px;line-height:14.19px;color:#c8c8c8;transform:scaleX(0.9579);transform-origin:0 0;">Shatter Promise Comp 1</span>
<div style="left:593px;top:442px;width:13px;height:12px;background:#ab9a78;"></div>
<span class="t" style="left:619.20px;top:444.34px;font-size:13.66px;line-height:13.66px;color:#c8c8c8;transform:scaleX(0.9579);transform-origin:0 0;">CARD2</span>
<span class="t" style="left:15.20px;top:470.97px;font-size:20.00px;line-height:20.00px;color:#3d97f2;transform:scaleX(0.9579);transform-origin:0 0;font-weight:bold">0:00:01:28</span>
<span class="t" style="left:13.70px;top:491.70px;font-size:13.23px;line-height:13.23px;color:#3d97f2;transform:scaleX(0.9579);transform-origin:0 0;">00058 (30.00 fps)</span>
<div style="left:123px;top:474px;width:376px;height:24px;background:#111;border:1px solid #2b2b2b;border-radius:5px"></div>
<svg style="left:131px;top:479px;" width="22" height="14" viewBox="0 0 22 14"><circle cx="6" cy="5.5" r="4.3" fill="none" stroke="#b8b8b8" stroke-width="1.5"/><path d="M9 9 L12 12" stroke="#b8b8b8" stroke-width="1.6"/><path d="M13 7 L15.5 9.5 L18 7" fill="none" stroke="#b8b8b8" stroke-width="1.3"/></svg>
<svg style="left:505px;top:470px;" width="160" height="35" viewBox="0 0 160 35"><rect x="9.5" y="11" width="7.5" height="4" rx="1" fill="#b4b4b4"/><path d="M17 13 L24 13 M20 13 L20 19.5 L24 19.5" fill="none" stroke="#b4b4b4" stroke-width="1.2"/><rect x="23" y="11" width="5.8" height="4" rx="1" fill="#b4b4b4"/><rect x="23" y="17.8" width="5.8" height="3.8" rx="1" fill="#b4b4b4"/><path d="M25.6 23.2 L30.8 23.2 L28.2 26.5Z" fill="#b4b4b4"/>
<rect x="39.5" y="19" width="20.5" height="6" fill="#3c3c3c"/><path d="M44 16 A5.5 5.5 0 0 1 55 16 Z" fill="#b4b4b4"/><circle cx="47.3" cy="14.2" r="1.2" fill="#1f1f1f"/><circle cx="51.8" cy="14.2" r="1.2" fill="#1f1f1f"/><rect x="48.2" y="16" width="2.8" height="7" rx="1" fill="#b4b4b4"/><path d="M41 16.5 L58.5 16.5" stroke="#b4b4b4" stroke-width="1.6"/>
<path d="M74.5 13 L71 13 L71 26 L83 26 L83 24" fill="none" stroke="#b4b4b4" stroke-width="1.5"/><rect x="76" y="8.7" width="12.8" height="13.8" rx="1" fill="#b4b4b4"/><path d="M78 9.5 L78 22 M87 9.5 L87 22" stroke="#1f1f1f" stroke-width="1" stroke-dasharray="1.2 1.6"/><rect x="80" y="15" width="4.5" height="1.4" fill="#1f1f1f"/>
<circle cx="107.5" cy="19.5" r="5.8" fill="none" stroke="#b4b4b4" stroke-width="1.3"/><circle cx="109.5" cy="17.5" r="5.8" fill="#1f1f1f" stroke="#b4b4b4" stroke-width="1.3"/><circle cx="112" cy="15.3" r="6" fill="#3c3c3c" stroke="#b4b4b4" stroke-width="1.4"/>
<rect x="131" y="10.3" width="19" height="16" fill="none" stroke="#b4b4b4" stroke-width="1.5"/><path d="M134 14 C138 14 139 16 141 19 C143 22 144 22.5 146.5 22.5" fill="none" stroke="#b4b4b4" stroke-width="1.3"/><path d="M134.5 10 L134.5 8 M138.5 10 L138.5 7.5 M142.5 10 L142.5 8 M146 10 L146 7.5 M130.5 13 L129.5 13 M130.5 18 L129.5 18 M130.5 23 L129.5 23" stroke="#b4b4b4" stroke-width="1.2"/></svg>
<div style="left:671px;top:466px;width:1176px;height:43px;background:#1f1f1f;"></div>
<div style="left:678px;top:471px;width:1161px;height:13px;background:#3a3631;border-radius:4px 0 0 0"></div>
<div style="left:671px;top:484px;width:1176px;height:25px;background:#1f1f1f;"></div>
<div style="left:757px;top:472px;width:9px;height:11px;background:#3d97f2;border-radius:5px 0 0 5px"></div>
<div style="left:766px;top:472px;width:24px;height:11px;background:#6a6a6a;border:1px solid #111"></div>
<div style="left:777px;top:473px;width:1.2px;height:9px;background:#3d97f2;"></div>
<div style="left:790px;top:472px;width:9px;height:11px;background:#3d97f2;border-radius:0 5px 5px 0"></div>
<span class="t" style="left:705.10px;top:487.43px;font-size:13.55px;line-height:13.55px;color:#c8c8c8;transform:scaleX(0.9579);transform-origin:0 0;">21f</span>
<div style="left:714.9px;top:500.5px;width:1.2px;height:6.5px;background:#c8c8c8;"></div>
<span class="t" style="left:788.84px;top:487.43px;font-size:13.55px;line-height:13.55px;color:#c8c8c8;transform:scaleX(0.9579);transform-origin:0 0;">22f</span>
<div style="left:798.64px;top:500.5px;width:1.2px;height:6.5px;background:#c8c8c8;"></div>
<span class="t" style="left:872.58px;top:487.43px;font-size:13.55px;line-height:13.55px;color:#c8c8c8;transform:scaleX(0.9579);transform-origin:0 0;">23f</span>
<div style="left:882.38px;top:500.5px;width:1.2px;height:6.5px;background:#c8c8c8;"></div>
<span class="t" style="left:956.32px;top:487.43px;font-size:13.55px;line-height:13.55px;color:#c8c8c8;transform:scaleX(0.9579);transform-origin:0 0;">24f</span>
<div style="left:966.1199999999999px;top:500.5px;width:1.2px;height:6.5px;background:#c8c8c8;"></div>
<span class="t" style="left:1040.06px;top:487.43px;font-size:13.55px;line-height:13.55px;color:#c8c8c8;transform:scaleX(0.9579);transform-origin:0 0;">25f</span>
<div style="left:1049.86px;top:500.5px;width:1.2px;height:6.5px;background:#c8c8c8;"></div>
<span class="t" style="left:1123.80px;top:487.43px;font-size:13.55px;line-height:13.55px;color:#c8c8c8;transform:scaleX(0.9579);transform-origin:0 0;">26f</span>
<div style="left:1133.6px;top:500.5px;width:1.2px;height:6.5px;background:#c8c8c8;"></div>
<span class="t" style="left:1207.54px;top:487.43px;font-size:13.55px;line-height:13.55px;color:#c8c8c8;transform:scaleX(0.9579);transform-origin:0 0;">27f</span>
<div style="left:1217.34px;top:500.5px;width:1.2px;height:6.5px;background:#c8c8c8;"></div>
<div style="left:1301.08px;top:500.5px;width:1.2px;height:6.5px;background:#c8c8c8;"></div>
<span class="t" style="left:1375.02px;top:487.43px;font-size:13.55px;line-height:13.55px;color:#c8c8c8;transform:scaleX(0.9579);transform-origin:0 0;">29f</span>
<div style="left:1384.82px;top:500.5px;width:1.2px;height:6.5px;background:#c8c8c8;"></div>
<span class="t" style="left:1450.26px;top:487.43px;font-size:13.55px;line-height:13.55px;color:#c8c8c8;transform:scaleX(0.9579);transform-origin:0 0;">02:00f</span>
<div style="left:1468.56px;top:500.5px;width:1.2px;height:6.5px;background:#c8c8c8;"></div>
<span class="t" style="left:1542.50px;top:487.43px;font-size:13.55px;line-height:13.55px;color:#c8c8c8;transform:scaleX(0.9579);transform-origin:0 0;">01f</span>
<div style="left:1552.3px;top:500.5px;width:1.2px;height:6.5px;background:#c8c8c8;"></div>
<span class="t" style="left:1626.24px;top:487.43px;font-size:13.55px;line-height:13.55px;color:#c8c8c8;transform:scaleX(0.9579);transform-origin:0 0;">02f</span>
<div style="left:1636.04px;top:500.5px;width:1.2px;height:6.5px;background:#c8c8c8;"></div>
<span class="t" style="left:1709.98px;top:487.43px;font-size:13.55px;line-height:13.55px;color:#c8c8c8;transform:scaleX(0.9579);transform-origin:0 0;">03f</span>
<div style="left:1719.7799999999997px;top:500.5px;width:1.2px;height:6.5px;background:#c8c8c8;"></div>
<span class="t" style="left:1793.72px;top:487.43px;font-size:13.55px;line-height:13.55px;color:#c8c8c8;transform:scaleX(0.9579);transform-origin:0 0;">04f</span>
<div style="left:1803.52px;top:500.5px;width:1.2px;height:6.5px;background:#c8c8c8;"></div>
<div style="left:672px;top:509px;width:1175px;height:19px;background:#646464;"></div>
<div style="left:672px;top:527.5px;width:1175px;height:5.5px;background:#262626;"></div>
<div style="left:672px;top:527.5px;width:1175px;height:1px;background:#111;"></div>
<div style="left:672px;top:532px;width:1175px;height:1.2px;background:#111;"></div>
<div style="left:2px;top:533px;width:668px;height:398px;background:#303030;"></div>
<div style="left:672px;top:533px;width:1175px;height:398px;background:#363636;"></div>
<div style="left:2px;top:548.6px;width:668px;height:1.2px;background:#121212;"></div>
<div style="left:8px;top:531.1px;width:15px;height:14px;background:#1a1a1a;border-radius:2px"></div>
<svg style="left:8px;top:533.1px" width="15" height="10"><use href="#eye" width="15" height="10"/></svg>
<div style="left:45.5px;top:530.85px;width:14.5px;height:14.5px;background:#121212;border-radius:2px"></div>
<div style="left:64.3px;top:530.85px;width:14.5px;height:14.5px;background:#121212;border-radius:2px"></div>
<svg style="left:92.5px;top:532.1px" width="8" height="12"><use href="#chev" width="8" height="12"/></svg>
<div style="left:108.2px;top:530.85px;width:14.6px;height:14.6px;background:#6a80e0;"></div>
<span class="t" style="left:133.60px;top:531.21px;font-size:14.52px;line-height:14.52px;color:#c8c8c8;transform:scaleX(0.9579);transform-origin:0 0;">111</span>
<svg style="left:172.5px;top:530.6px" width="15" height="15"><use href="#star" width="15" height="15"/></svg>
<span class="t" style="left:193.50px;top:531.44px;font-size:14.25px;line-height:14.25px;color:#c8c8c8;transform:scaleX(0.9579);transform-origin:0 0;">Shape Layer 3</span>
<div style="left:336.5px;top:530.85px;width:15.5px;height:14.5px;background:#121212;border-radius:2px"></div>
<svg style="left:337px;top:531.1px" width="15" height="14"><use href="#shy" width="15" height="14"/></svg>
<div style="left:355.3px;top:530.85px;width:15.5px;height:14.5px;background:#121212;border-radius:2px"></div>
<svg style="left:355.5px;top:531.1px" width="15" height="15"><use href="#sun" width="15" height="15"/></svg>
<div style="left:374px;top:530.85px;width:15px;height:14.5px;background:#121212;border-radius:2px"></div>
<svg style="left:374px;top:531.1px" width="15" height="15"><use href="#qual" width="15" height="15"/></svg>
<div style="left:393px;top:530.85px;width:15px;height:14.5px;background:#121212;border-radius:2px"></div>
<svg style="left:393px;top:530.1px" width="15" height="15"><use href="#fx" width="15" height="15"/></svg>
<div style="left:430.3px;top:530.85px;width:14.5px;height:14.5px;background:#121212;border-radius:2px"></div>
<div style="left:448.8px;top:530.85px;width:14.5px;height:14.5px;background:#121212;border-radius:2px"></div>
<div style="left:467.8px;top:530.85px;width:14.5px;height:14.5px;background:#121212;border-radius:2px"></div>
<svg style="left:511px;top:531.6px" width="15" height="15"><use href="#spir" width="15" height="15"/></svg>
<div style="left:534.7px;top:529.6px;width:111px;height:17.5px;background:#050505;border-radius:4px"></div>
<span class="t" style="left:544.20px;top:531.30px;font-size:14.41px;line-height:14.41px;color:#d4d4d4;transform:scaleX(0.9579);transform-origin:0 0;">105. Null 1</span>
<svg style="left:623px;top:534.1px;" width="14" height="9" viewBox="0 0 14 9"><path d="M1.5 1.5 L7 7 L12.5 1.5" fill="none" stroke="#e8e8e8" stroke-width="2"/></svg>
<div style="left:1301.5px;top:528.35px;width:83.5px;height:20.25px;background:rgba(255,255,255,0.09);"></div>
<div style="left:672px;top:548.6px;width:1175px;height:1.25px;background:#1a1a1a;"></div>
<div style="left:2px;top:569.85px;width:668px;height:1.2px;background:#121212;"></div>
<div style="left:8px;top:552.35px;width:15px;height:14px;background:#1a1a1a;border-radius:2px"></div>
<svg style="left:8px;top:554.35px" width="15" height="10"><use href="#eye" width="15" height="10"/></svg>
<div style="left:45.5px;top:552.1px;width:14.5px;height:14.5px;background:#121212;border-radius:2px"></div>
<div style="left:64.3px;top:552.1px;width:14.5px;height:14.5px;background:#121212;border-radius:2px"></div>
<svg style="left:92.5px;top:553.35px" width="8" height="12"><use href="#chev" width="8" height="12"/></svg>
<div style="left:108.2px;top:552.1px;width:14.6px;height:14.6px;background:#6a80e0;"></div>
<span class="t" style="left:133.60px;top:552.46px;font-size:14.52px;line-height:14.52px;color:#c8c8c8;transform:scaleX(0.9579);transform-origin:0 0;">112</span>
<svg style="left:172.5px;top:551.85px" width="15" height="15"><use href="#star" width="15" height="15"/></svg>
<span class="t" style="left:193.50px;top:552.69px;font-size:14.25px;line-height:14.25px;color:#c8c8c8;transform:scaleX(0.9579);transform-origin:0 0;">Shape Layer 2</span>
<div style="left:336.5px;top:552.1px;width:15.5px;height:14.5px;background:#121212;border-radius:2px"></div>
<svg style="left:337px;top:552.35px" width="15" height="14"><use href="#shy" width="15" height="14"/></svg>
<div style="left:355.3px;top:552.1px;width:15.5px;height:14.5px;background:#121212;border-radius:2px"></div>
<svg style="left:355.5px;top:552.35px" width="15" height="15"><use href="#sun" width="15" height="15"/></svg>
<div style="left:374px;top:552.1px;width:15px;height:14.5px;background:#121212;border-radius:2px"></div>
<svg style="left:374px;top:552.35px" width="15" height="15"><use href="#qual" width="15" height="15"/></svg>
<div style="left:393px;top:552.1px;width:15px;height:14.5px;background:#121212;border-radius:2px"></div>
<svg style="left:393px;top:551.35px" width="15" height="15"><use href="#fx" width="15" height="15"/></svg>
<div style="left:430.3px;top:552.1px;width:14.5px;height:14.5px;background:#121212;border-radius:2px"></div>
<div style="left:448.8px;top:552.1px;width:14.5px;height:14.5px;background:#121212;border-radius:2px"></div>
<div style="left:467.8px;top:552.1px;width:14.5px;height:14.5px;background:#121212;border-radius:2px"></div>
<svg style="left:511px;top:552.85px" width="15" height="15"><use href="#spir" width="15" height="15"/></svg>
<div style="left:534.7px;top:550.85px;width:111px;height:17.5px;background:#050505;border-radius:4px"></div>
<span class="t" style="left:544.20px;top:552.55px;font-size:14.41px;line-height:14.41px;color:#d4d4d4;transform:scaleX(0.9579);transform-origin:0 0;">105. Null 1</span>
<svg style="left:623px;top:555.35px;" width="14" height="9" viewBox="0 0 14 9"><path d="M1.5 1.5 L7 7 L12.5 1.5" fill="none" stroke="#e8e8e8" stroke-width="2"/></svg>
<div style="left:1301.5px;top:549.6px;width:83.5px;height:20.25px;background:rgba(255,255,255,0.09);"></div>
<div style="left:672px;top:569.85px;width:1175px;height:1.25px;background:#1a1a1a;"></div>
<div style="left:2px;top:591.1px;width:668px;height:1.2px;background:#121212;"></div>
<div style="left:8px;top:573.6px;width:15px;height:14px;background:#1a1a1a;border-radius:2px"></div>
<svg style="left:8px;top:575.6px" width="15" height="10"><use href="#eye" width="15" height="10"/></svg>
<div style="left:45.5px;top:573.35px;width:14.5px;height:14.5px;background:#121212;border-radius:2px"></div>
<div style="left:64.3px;top:573.35px;width:14.5px;height:14.5px;background:#121212;border-radius:2px"></div>
<svg style="left:92.5px;top:574.6px" width="8" height="12"><use href="#chev" width="8" height="12"/></svg>
<div style="left:108.2px;top:573.35px;width:14.6px;height:14.6px;background:#afaed8;"></div>
<span class="t" style="left:133.60px;top:573.71px;font-size:14.52px;line-height:14.52px;color:#c8c8c8;transform:scaleX(0.9579);transform-origin:0 0;">113</span>
<svg style="left:174px;top:573.1px" width="13" height="15"><use href="#img" width="13" height="15"/></svg>
<span class="t" style="left:193.50px;top:573.76px;font-size:14.46px;line-height:14.46px;color:#c8c8c8;transform:scaleX(0.9579);transform-origin:0 0;">[image611.png]</span>
<div style="left:336.5px;top:573.35px;width:15.5px;height:14.5px;background:#121212;border-radius:2px"></div>
<svg style="left:337px;top:573.6px" width="15" height="14"><use href="#shy" width="15" height="14"/></svg>
<div style="left:374px;top:573.35px;width:15px;height:14.5px;background:#121212;border-radius:2px"></div>
<svg style="left:374px;top:573.6px" width="15" height="15"><use href="#qual" width="15" height="15"/></svg>
<div style="left:393px;top:573.35px;width:15px;height:14.5px;background:#121212;border-radius:2px"></div>
<svg style="left:393px;top:572.6px" width="15" height="15"><use href="#fx" width="15" height="15"/></svg>
<div style="left:430.3px;top:573.35px;width:14.5px;height:14.5px;background:#121212;border-radius:2px"></div>
<div style="left:448.8px;top:573.35px;width:14.5px;height:14.5px;background:#121212;border-radius:2px"></div>
<div style="left:467.8px;top:573.35px;width:14.5px;height:14.5px;background:#121212;border-radius:2px"></div>
<svg style="left:511px;top:574.1px" width="15" height="15"><use href="#spir" width="15" height="15"/></svg>
<div style="left:534.7px;top:572.1px;width:111px;height:17.5px;background:#050505;border-radius:4px"></div>
<span class="t" style="left:544.20px;top:573.80px;font-size:14.41px;line-height:14.41px;color:#d4d4d4;transform:scaleX(0.9579);transform-origin:0 0;">105. Null 1</span>
<svg style="left:623px;top:576.6px;" width="14" height="9" viewBox="0 0 14 9"><path d="M1.5 1.5 L7 7 L12.5 1.5" fill="none" stroke="#e8e8e8" stroke-width="2"/></svg>
<div style="left:1301.5px;top:570.85px;width:83.5px;height:20.25px;background:rgba(255,255,255,0.09);"></div>
<div style="left:672px;top:591.1px;width:1175px;height:1.25px;background:#1a1a1a;"></div>
<div style="left:2px;top:612.35px;width:668px;height:1.2px;background:#121212;"></div>
<div style="left:7px;top:594.35px;width:15.5px;height:15px;background:#121212;border-radius:2px"></div>
<svg style="left:26px;top:594.35px" width="17" height="15"><use href="#spk" width="17" height="15"/></svg>
<div style="left:45.5px;top:594.6px;width:14.5px;height:14.5px;background:#121212;border-radius:2px"></div>
<div style="left:64.3px;top:594.6px;width:14.5px;height:14.5px;background:#121212;border-radius:2px"></div>
<svg style="left:92.5px;top:595.85px" width="8" height="12"><use href="#chev" width="8" height="12"/></svg>
<div style="left:108.2px;top:594.6px;width:14.6px;height:14.6px;background:#a9d2c8;"></div>
<span class="t" style="left:133.60px;top:594.96px;font-size:14.52px;line-height:14.52px;color:#c8c8c8;transform:scaleX(0.9579);transform-origin:0 0;">114</span>
<svg style="left:174px;top:594.35px" width="13" height="15"><use href="#vid" width="13" height="15"/></svg>
<span class="t" style="left:193.50px;top:595.64px;font-size:13.71px;line-height:13.71px;color:#c8c8c8;transform:scaleX(0.9579);transform-origin:0 0;">[ssstik…234415.mp4]</span>
<div style="left:336.5px;top:594.6px;width:15.5px;height:14.5px;background:#121212;border-radius:2px"></div>
<svg style="left:337px;top:594.85px" width="15" height="14"><use href="#shy" width="15" height="14"/></svg>
<div style="left:374px;top:594.6px;width:15px;height:14.5px;background:#121212;border-radius:2px"></div>
<svg style="left:374px;top:594.85px" width="15" height="15"><use href="#qual" width="15" height="15"/></svg>
<div style="left:411.6px;top:594.6px;width:14.5px;height:14.5px;background:#121212;border-radius:2px"></div>
<div style="left:430.3px;top:594.6px;width:14.5px;height:14.5px;background:#121212;border-radius:2px"></div>
<div style="left:448.8px;top:594.6px;width:14.5px;height:14.5px;background:#121212;border-radius:2px"></div>
<div style="left:467.8px;top:594.6px;width:14.5px;height:14.5px;background:#121212;border-radius:2px"></div>
<svg style="left:511px;top:595.35px" width="15" height="15"><use href="#spir" width="15" height="15"/></svg>
<div style="left:534.7px;top:593.35px;width:111px;height:17.5px;background:#050505;border-radius:4px"></div>
<span class="t" style="left:544.20px;top:595.05px;font-size:14.41px;line-height:14.41px;color:#d4d4d4;transform:scaleX(0.9579);transform-origin:0 0;">105. Null 1</span>
<svg style="left:623px;top:597.85px;" width="14" height="9" viewBox="0 0 14 9"><path d="M1.5 1.5 L7 7 L12.5 1.5" fill="none" stroke="#e8e8e8" stroke-width="2"/></svg>
<div style="left:672px;top:592.1px;width:1175px;height:20.25px;background:#4b5452;"></div>
<div style="left:672px;top:611.15px;width:1175px;height:1.2px;background:rgba(0,0,0,0.25);"></div>
<div style="left:672px;top:592.1px;width:1175px;height:1px;background:rgba(255,255,255,0.07);"></div>
<div style="left:672px;top:612.35px;width:1175px;height:1.25px;background:#1a1a1a;"></div>
<div style="left:2px;top:633.6px;width:668px;height:1.2px;background:#121212;"></div>
<div style="left:7px;top:615.6px;width:15.5px;height:15px;background:#121212;border-radius:2px"></div>
<svg style="left:26px;top:615.6px" width="17" height="15"><use href="#spk" width="17" height="15"/></svg>
<div style="left:45.5px;top:615.85px;width:14.5px;height:14.5px;background:#121212;border-radius:2px"></div>
<div style="left:64.3px;top:615.85px;width:14.5px;height:14.5px;background:#121212;border-radius:2px"></div>
<svg style="left:92.5px;top:617.1px" width="8" height="12"><use href="#chev" width="8" height="12"/></svg>
<div style="left:108.2px;top:615.85px;width:14.6px;height:14.6px;background:#a9d2c8;"></div>
<span class="t" style="left:133.60px;top:616.21px;font-size:14.52px;line-height:14.52px;color:#c8c8c8;transform:scaleX(0.9579);transform-origin:0 0;">115</span>
<svg style="left:174px;top:615.6px" width="13" height="15"><use href="#vid" width="13" height="15"/></svg>
<span class="t" style="left:193.50px;top:616.89px;font-size:13.71px;line-height:13.71px;color:#c8c8c8;transform:scaleX(0.9579);transform-origin:0 0;">[ssstik…234415.mp4]</span>
<div style="left:336.5px;top:615.85px;width:15.5px;height:14.5px;background:#121212;border-radius:2px"></div>
<svg style="left:337px;top:616.1px" width="15" height="14"><use href="#shy" width="15" height="14"/></svg>
<div style="left:374px;top:615.85px;width:15px;height:14.5px;background:#121212;border-radius:2px"></div>
<svg style="left:374px;top:616.1px" width="15" height="15"><use href="#qual" width="15" height="15"/></svg>
<div style="left:411.6px;top:615.85px;width:14.5px;height:14.5px;background:#121212;border-radius:2px"></div>
<div style="left:430.3px;top:615.85px;width:14.5px;height:14.5px;background:#121212;border-radius:2px"></div>
<div style="left:448.8px;top:615.85px;width:14.5px;height:14.5px;background:#121212;border-radius:2px"></div>
<div style="left:467.8px;top:615.85px;width:14.5px;height:14.5px;background:#121212;border-radius:2px"></div>
<svg style="left:511px;top:616.6px" width="15" height="15"><use href="#spir" width="15" height="15"/></svg>
<div style="left:534.7px;top:614.6px;width:111px;height:17.5px;background:#050505;border-radius:4px"></div>
<span class="t" style="left:544.20px;top:616.30px;font-size:14.41px;line-height:14.41px;color:#d4d4d4;transform:scaleX(0.9579);transform-origin:0 0;">105. Null 1</span>
<svg style="left:623px;top:619.1px;" width="14" height="9" viewBox="0 0 14 9"><path d="M1.5 1.5 L7 7 L12.5 1.5" fill="none" stroke="#e8e8e8" stroke-width="2"/></svg>
<div style="left:672px;top:613.35px;width:1175px;height:20.25px;background:#4b5452;"></div>
<div style="left:672px;top:632.4px;width:1175px;height:1.2px;background:rgba(0,0,0,0.25);"></div>
<div style="left:672px;top:613.35px;width:1175px;height:1px;background:rgba(255,255,255,0.07);"></div>
<div style="left:672px;top:633.6px;width:1175px;height:1.25px;background:#1a1a1a;"></div>
<div style="left:2px;top:654.85px;width:668px;height:1.2px;background:#121212;"></div>
<div style="left:8px;top:637.35px;width:15px;height:14px;background:#1a1a1a;border-radius:2px"></div>
<svg style="left:8px;top:639.35px" width="15" height="10"><use href="#eye" width="15" height="10"/></svg>
<div style="left:45.5px;top:637.1px;width:14.5px;height:14.5px;background:#121212;border-radius:2px"></div>
<div style="left:64.3px;top:637.1px;width:14.5px;height:14.5px;background:#121212;border-radius:2px"></div>
<svg style="left:92.5px;top:638.35px" width="8" height="12"><use href="#chev" width="8" height="12"/></svg>
<div style="left:108.2px;top:637.1px;width:14.6px;height:14.6px;background:#c03a3a;"></div>
<span class="t" style="left:133.60px;top:637.46px;font-size:14.52px;line-height:14.52px;color:#c8c8c8;transform:scaleX(0.9579);transform-origin:0 0;">116</span>
<div style="left:172px;top:636.35px;width:16px;height:16px;background:#050505;"></div>
<span class="t" style="left:193.50px;top:637.69px;font-size:14.25px;line-height:14.25px;color:#c8c8c8;transform:scaleX(0.9579);transform-origin:0 0;">[BG]</span>
<div style="left:336.5px;top:637.1px;width:15.5px;height:14.5px;background:#121212;border-radius:2px"></div>
<svg style="left:337px;top:637.35px" width="15" height="14"><use href="#shy" width="15" height="14"/></svg>
<div style="left:355.3px;top:637.1px;width:15.5px;height:14.5px;background:#121212;border-radius:2px"></div>
<div style="left:374px;top:637.1px;width:15px;height:14.5px;background:#121212;border-radius:2px"></div>
<svg style="left:374px;top:637.35px" width="15" height="15"><use href="#qual" width="15" height="15"/></svg>
<div style="left:393px;top:637.1px;width:15px;height:14.5px;background:#121212;border-radius:2px"></div>
<svg style="left:393px;top:636.35px" width="15" height="15"><use href="#fx" width="15" height="15"/></svg>
<div style="left:430.3px;top:637.1px;width:14.5px;height:14.5px;background:#121212;border-radius:2px"></div>
<div style="left:448.8px;top:637.1px;width:14.5px;height:14.5px;background:#121212;border-radius:2px"></div>
<div style="left:467.8px;top:637.1px;width:14.5px;height:14.5px;background:#121212;border-radius:2px"></div>
<svg style="left:511px;top:637.85px" width="15" height="15"><use href="#spir" width="15" height="15"/></svg>
<div style="left:534.7px;top:635.85px;width:111px;height:17.5px;background:#050505;border-radius:4px"></div>
<span class="t" style="left:544.20px;top:637.55px;font-size:14.41px;line-height:14.41px;color:#d4d4d4;transform:scaleX(0.9579);transform-origin:0 0;">None</span>
<svg style="left:623px;top:640.35px;" width="14" height="9" viewBox="0 0 14 9"><path d="M1.5 1.5 L7 7 L12.5 1.5" fill="none" stroke="#e8e8e8" stroke-width="2"/></svg>
<div style="left:1301.5px;top:634.6px;width:83.5px;height:20.25px;background:rgba(255,255,255,0.09);"></div>
<div style="left:672px;top:654.85px;width:1175px;height:1.25px;background:#1a1a1a;"></div>
<div style="left:2px;top:676.1px;width:668px;height:1.2px;background:#121212;"></div>
<div style="left:8px;top:658.6px;width:15px;height:14px;background:#1a1a1a;border-radius:2px"></div>
<svg style="left:8px;top:660.6px" width="15" height="10"><use href="#eye" width="15" height="10"/></svg>
<div style="left:45.5px;top:658.35px;width:14.5px;height:14.5px;background:#121212;border-radius:2px"></div>
<div style="left:64.3px;top:658.35px;width:14.5px;height:14.5px;background:#121212;border-radius:2px"></div>
<svg style="left:92.5px;top:659.6px" width="8" height="12"><use href="#chev" width="8" height="12"/></svg>
<div style="left:108.2px;top:658.35px;width:14.6px;height:14.6px;background:#c03a3a;"></div>
<span class="t" style="left:133.60px;top:658.71px;font-size:14.52px;line-height:14.52px;color:#c8c8c8;transform:scaleX(0.9579);transform-origin:0 0;">117</span>
<div style="left:172px;top:657.6px;width:16px;height:16px;background:#ffffff;"></div>
<span class="t" style="left:193.50px;top:658.94px;font-size:14.25px;line-height:14.25px;color:#c8c8c8;transform:scaleX(0.9579);transform-origin:0 0;">[Null 13]</span>
<div style="left:336.5px;top:658.35px;width:15.5px;height:14.5px;background:#121212;border-radius:2px"></div>
<svg style="left:337px;top:658.6px" width="15" height="14"><use href="#shy" width="15" height="14"/></svg>
<div style="left:355.3px;top:658.35px;width:15.5px;height:14.5px;background:#121212;border-radius:2px"></div>
<div style="left:374px;top:658.35px;width:15px;height:14.5px;background:#121212;border-radius:2px"></div>
<svg style="left:374px;top:658.6px" width="15" height="15"><use href="#qual" width="15" height="15"/></svg>
<div style="left:430.3px;top:658.35px;width:14.5px;height:14.5px;background:#121212;border-radius:2px"></div>
<div style="left:448.8px;top:658.35px;width:14.5px;height:14.5px;background:#121212;border-radius:2px"></div>
<div style="left:467.8px;top:658.35px;width:14.5px;height:14.5px;background:#121212;border-radius:2px"></div>
<svg style="left:468px;top:658.1px" width="15" height="15"><use href="#axis" width="15" height="15"/></svg>
<svg style="left:511px;top:659.1px" width="15" height="15"><use href="#spir" width="15" height="15"/></svg>
<div style="left:534.7px;top:657.1px;width:111px;height:17.5px;background:#050505;border-radius:4px"></div>
<span class="t" style="left:544.20px;top:658.80px;font-size:14.41px;line-height:14.41px;color:#d4d4d4;transform:scaleX(0.9579);transform-origin:0 0;">None</span>
<svg style="left:623px;top:661.6px;" width="14" height="9" viewBox="0 0 14 9"><path d="M1.5 1.5 L7 7 L12.5 1.5" fill="none" stroke="#e8e8e8" stroke-width="2"/></svg>
<div style="left:672px;top:655.85px;width:1175px;height:20.25px;background:#773538;"></div>
<div style="left:1301.5px;top:655.85px;width:83.5px;height:20.25px;background:rgba(255,255,255,0.09);"></div>
<div style="left:672px;top:674.9px;width:1175px;height:1.2px;background:rgba(0,0,0,0.25);"></div>
<div style="left:672px;top:655.85px;width:1175px;height:1px;background:rgba(255,255,255,0.07);"></div>
<div style="left:672px;top:676.1px;width:1175px;height:1.25px;background:#1a1a1a;"></div>
<div style="left:2px;top:697.35px;width:668px;height:1.2px;background:#121212;"></div>
<div style="left:8px;top:679.85px;width:15px;height:14px;background:#1a1a1a;border-radius:2px"></div>
<svg style="left:8px;top:681.85px" width="15" height="10"><use href="#eye" width="15" height="10"/></svg>
<div style="left:45.5px;top:679.6px;width:14.5px;height:14.5px;background:#121212;border-radius:2px"></div>
<div style="left:64.3px;top:679.6px;width:14.5px;height:14.5px;background:#121212;border-radius:2px"></div>
<svg style="left:92.5px;top:680.85px" width="8" height="12"><use href="#chev" width="8" height="12"/></svg>
<div style="left:108.2px;top:679.6px;width:14.6px;height:14.6px;background:#c03a3a;"></div>
<span class="t" style="left:133.60px;top:679.96px;font-size:14.52px;line-height:14.52px;color:#c8c8c8;transform:scaleX(0.9579);transform-origin:0 0;">118</span>
<div style="left:172px;top:678.85px;width:16px;height:16px;background:#ffffff;"></div>
<span class="t" style="left:193.50px;top:680.19px;font-size:14.25px;line-height:14.25px;color:#c8c8c8;transform:scaleX(0.9579);transform-origin:0 0;">[Null 12]</span>
<div style="left:336.5px;top:679.6px;width:15.5px;height:14.5px;background:#121212;border-radius:2px"></div>
<svg style="left:337px;top:679.85px" width="15" height="14"><use href="#shy" width="15" height="14"/></svg>
<div style="left:355.3px;top:679.6px;width:15.5px;height:14.5px;background:#121212;border-radius:2px"></div>
<div style="left:374px;top:679.6px;width:15px;height:14.5px;background:#121212;border-radius:2px"></div>
<svg style="left:374px;top:679.85px" width="15" height="15"><use href="#qual" width="15" height="15"/></svg>
<div style="left:430.3px;top:679.6px;width:14.5px;height:14.5px;background:#121212;border-radius:2px"></div>
<div style="left:448.8px;top:679.6px;width:14.5px;height:14.5px;background:#121212;border-radius:2px"></div>
<div style="left:467.8px;top:679.6px;width:14.5px;height:14.5px;background:#121212;border-radius:2px"></div>
<svg style="left:468px;top:679.35px" width="15" height="15"><use href="#axis" width="15" height="15"/></svg>
<svg style="left:511px;top:680.35px" width="15" height="15"><use href="#spir" width="15" height="15"/></svg>
<div style="left:534.7px;top:678.35px;width:111px;height:17.5px;background:#050505;border-radius:4px"></div>
<span class="t" style="left:544.20px;top:680.05px;font-size:14.41px;line-height:14.41px;color:#d4d4d4;transform:scaleX(0.9579);transform-origin:0 0;">117. Null 13</span>
<svg style="left:623px;top:682.85px;" width="14" height="9" viewBox="0 0 14 9"><path d="M1.5 1.5 L7 7 L12.5 1.5" fill="none" stroke="#e8e8e8" stroke-width="2"/></svg>
<div style="left:672px;top:677.1px;width:1175px;height:20.25px;background:#773538;"></div>
<div style="left:1301.5px;top:677.1px;width:83.5px;height:20.25px;background:rgba(255,255,255,0.09);"></div>
<div style="left:672px;top:696.15px;width:1175px;height:1.2px;background:rgba(0,0,0,0.25);"></div>
<div style="left:672px;top:677.1px;width:1175px;height:1px;background:rgba(255,255,255,0.07);"></div>
<div style="left:672px;top:697.35px;width:1175px;height:1.25px;background:#1a1a1a;"></div>
<div style="left:2px;top:718.6px;width:668px;height:1.2px;background:#121212;"></div>
<div style="left:8px;top:701.1px;width:15px;height:14px;background:#1a1a1a;border-radius:2px"></div>
<svg style="left:8px;top:703.1px" width="15" height="10"><use href="#eye" width="15" height="10"/></svg>
<div style="left:45.5px;top:700.85px;width:14.5px;height:14.5px;background:#121212;border-radius:2px"></div>
<div style="left:64.3px;top:700.85px;width:14.5px;height:14.5px;background:#121212;border-radius:2px"></div>
<svg style="left:92.5px;top:702.1px" width="8" height="12"><use href="#chev" width="8" height="12"/></svg>
<div style="left:108.2px;top:700.85px;width:14.6px;height:14.6px;background:#e8bcc8;"></div>
<span class="t" style="left:133.60px;top:701.21px;font-size:14.52px;line-height:14.52px;color:#c8c8c8;transform:scaleX(0.9579);transform-origin:0 0;">119</span>
<svg style="left:172px;top:701.1px" width="16" height="14"><use href="#camr" width="16" height="14"/></svg>
<span class="t" style="left:193.50px;top:701.44px;font-size:14.25px;line-height:14.25px;color:#c8c8c8;transform:scaleX(0.9579);transform-origin:0 0;">Camera 1</span>
<div style="left:336.5px;top:700.85px;width:15.5px;height:14.5px;background:#121212;border-radius:2px"></div>
<svg style="left:337px;top:701.1px" width="15" height="14"><use href="#shy" width="15" height="14"/></svg>
<div style="left:467.8px;top:700.85px;width:14.5px;height:14.5px;background:#121212;border-radius:2px"></div>
<svg style="left:468px;top:700.6px" width="15" height="15"><use href="#axis" width="15" height="15"/></svg>
<svg style="left:511px;top:701.6px" width="15" height="15"><use href="#spir" width="15" height="15"/></svg>
<div style="left:534.7px;top:699.6px;width:111px;height:17.5px;background:#050505;border-radius:4px"></div>
<span class="t" style="left:544.20px;top:701.30px;font-size:14.41px;line-height:14.41px;color:#d4d4d4;transform:scaleX(0.9579);transform-origin:0 0;">118. Null 12</span>
<svg style="left:623px;top:704.1px;" width="14" height="9" viewBox="0 0 14 9"><path d="M1.5 1.5 L7 7 L12.5 1.5" fill="none" stroke="#e8e8e8" stroke-width="2"/></svg>
<div style="left:672px;top:698.35px;width:1175px;height:20.25px;background:#8e7a80;"></div>
<div style="left:1301.5px;top:698.35px;width:83.5px;height:20.25px;background:rgba(255,255,255,0.09);"></div>
<div style="left:672px;top:717.4px;width:1175px;height:1.2px;background:rgba(0,0,0,0.25);"></div>
<div style="left:672px;top:698.35px;width:1175px;height:1px;background:rgba(255,255,255,0.07);"></div>
<div style="left:672px;top:718.6px;width:1175px;height:1.25px;background:#1a1a1a;"></div>
<div style="left:2px;top:739.85px;width:668px;height:1.2px;background:#121212;"></div>
<div style="left:8px;top:722.35px;width:15px;height:14px;background:#1a1a1a;border-radius:2px"></div>
<svg style="left:8px;top:724.35px" width="15" height="10"><use href="#eye" width="15" height="10"/></svg>
<div style="left:45.5px;top:722.1px;width:14.5px;height:14.5px;background:#121212;border-radius:2px"></div>
<div style="left:64.3px;top:722.1px;width:14.5px;height:14.5px;background:#121212;border-radius:2px"></div>
<svg style="left:92.5px;top:723.35px" width="8" height="12"><use href="#chev" width="8" height="12"/></svg>
<div style="left:108.2px;top:722.1px;width:14.6px;height:14.6px;background:#afaed8;"></div>
<span class="t" style="left:133.60px;top:722.46px;font-size:14.52px;line-height:14.52px;color:#c8c8c8;transform:scaleX(0.9579);transform-origin:0 0;">120</span>
<svg style="left:174px;top:721.85px" width="13" height="15"><use href="#img" width="13" height="15"/></svg>
<span class="t" style="left:193.50px;top:722.51px;font-size:14.46px;line-height:14.46px;color:#c8c8c8;transform:scaleX(0.9579);transform-origin:0 0;">[image397.png]</span>
<div style="left:336.5px;top:722.1px;width:15.5px;height:14.5px;background:#121212;border-radius:2px"></div>
<svg style="left:337px;top:722.35px" width="15" height="14"><use href="#shy" width="15" height="14"/></svg>
<div style="left:374px;top:722.1px;width:15px;height:14.5px;background:#121212;border-radius:2px"></div>
<svg style="left:374px;top:722.35px" width="15" height="15"><use href="#qual" width="15" height="15"/></svg>
<div style="left:393px;top:722.1px;width:15px;height:14.5px;background:#121212;border-radius:2px"></div>
<svg style="left:393px;top:721.35px" width="15" height="15"><use href="#fx" width="15" height="15"/></svg>
<div style="left:430.3px;top:722.1px;width:14.5px;height:14.5px;background:#121212;border-radius:2px"></div>
<div style="left:448.8px;top:722.1px;width:14.5px;height:14.5px;background:#121212;border-radius:2px"></div>
<div style="left:467.8px;top:722.1px;width:14.5px;height:14.5px;background:#121212;border-radius:2px"></div>
<svg style="left:468px;top:721.85px" width="15" height="15"><use href="#cube" width="15" height="15"/></svg>
<svg style="left:511px;top:722.85px" width="15" height="15"><use href="#spir" width="15" height="15"/></svg>
<div style="left:534.7px;top:720.85px;width:111px;height:17.5px;background:#050505;border-radius:4px"></div>
<span class="t" style="left:544.20px;top:722.55px;font-size:14.41px;line-height:14.41px;color:#d4d4d4;transform:scaleX(0.9579);transform-origin:0 0;">None</span>
<svg style="left:623px;top:725.35px;" width="14" height="9" viewBox="0 0 14 9"><path d="M1.5 1.5 L7 7 L12.5 1.5" fill="none" stroke="#e8e8e8" stroke-width="2"/></svg>
<div style="left:798px;top:719.6px;width:1049px;height:20.25px;background:#6f6e80;"></div>
<div style="left:1301.5px;top:719.6px;width:83.5px;height:20.25px;background:rgba(255,255,255,0.09);"></div>
<div style="left:798px;top:738.65px;width:1049px;height:1.2px;background:rgba(0,0,0,0.25);"></div>
<div style="left:798px;top:719.6px;width:1049px;height:1px;background:rgba(255,255,255,0.07);"></div>
<div style="left:672px;top:739.85px;width:1175px;height:1.25px;background:#1a1a1a;"></div>
<div style="left:2px;top:761.1px;width:668px;height:1.2px;background:#121212;"></div>
<div style="left:8px;top:743.6px;width:15px;height:14px;background:#1a1a1a;border-radius:2px"></div>
<svg style="left:8px;top:745.6px" width="15" height="10"><use href="#eye" width="15" height="10"/></svg>
<div style="left:45.5px;top:743.35px;width:14.5px;height:14.5px;background:#121212;border-radius:2px"></div>
<div style="left:64.3px;top:743.35px;width:14.5px;height:14.5px;background:#121212;border-radius:2px"></div>
<svg style="left:92.5px;top:744.6px" width="8" height="12"><use href="#chev" width="8" height="12"/></svg>
<div style="left:108.2px;top:743.35px;width:14.6px;height:14.6px;background:#afaed8;"></div>
<span class="t" style="left:133.60px;top:743.71px;font-size:14.52px;line-height:14.52px;color:#c8c8c8;transform:scaleX(0.9579);transform-origin:0 0;">121</span>
<svg style="left:174px;top:743.1px" width="13" height="15"><use href="#img" width="13" height="15"/></svg>
<span class="t" style="left:193.50px;top:743.76px;font-size:14.46px;line-height:14.46px;color:#c8c8c8;transform:scaleX(0.9579);transform-origin:0 0;">[image397.png]</span>
<div style="left:336.5px;top:743.35px;width:15.5px;height:14.5px;background:#121212;border-radius:2px"></div>
<svg style="left:337px;top:743.6px" width="15" height="14"><use href="#shy" width="15" height="14"/></svg>
<div style="left:374px;top:743.35px;width:15px;height:14.5px;background:#121212;border-radius:2px"></div>
<svg style="left:374px;top:743.6px" width="15" height="15"><use href="#qual" width="15" height="15"/></svg>
<div style="left:393px;top:743.35px;width:15px;height:14.5px;background:#121212;border-radius:2px"></div>
<svg style="left:393px;top:742.6px" width="15" height="15"><use href="#fx" width="15" height="15"/></svg>
<div style="left:430.3px;top:743.35px;width:14.5px;height:14.5px;background:#121212;border-radius:2px"></div>
<div style="left:448.8px;top:743.35px;width:14.5px;height:14.5px;background:#121212;border-radius:2px"></div>
<div style="left:467.8px;top:743.35px;width:14.5px;height:14.5px;background:#121212;border-radius:2px"></div>
<svg style="left:468px;top:743.1px" width="15" height="15"><use href="#cube" width="15" height="15"/></svg>
<svg style="left:511px;top:744.1px" width="15" height="15"><use href="#spir" width="15" height="15"/></svg>
<div style="left:534.7px;top:742.1px;width:111px;height:17.5px;background:#050505;border-radius:4px"></div>
<span class="t" style="left:544.20px;top:743.80px;font-size:14.41px;line-height:14.41px;color:#d4d4d4;transform:scaleX(0.9579);transform-origin:0 0;">None</span>
<svg style="left:623px;top:746.6px;" width="14" height="9" viewBox="0 0 14 9"><path d="M1.5 1.5 L7 7 L12.5 1.5" fill="none" stroke="#e8e8e8" stroke-width="2"/></svg>
<div style="left:798px;top:740.85px;width:1049px;height:20.25px;background:#6f6e80;"></div>
<div style="left:1301.5px;top:740.85px;width:83.5px;height:20.25px;background:rgba(255,255,255,0.09);"></div>
<div style="left:798px;top:759.9px;width:1049px;height:1.2px;background:rgba(0,0,0,0.25);"></div>
<div style="left:798px;top:740.85px;width:1049px;height:1px;background:rgba(255,255,255,0.07);"></div>
<div style="left:672px;top:761.1px;width:1175px;height:1.25px;background:#1a1a1a;"></div>
<div style="left:2px;top:762.1px;width:668px;height:20.25px;background:#3c3c3c;"></div>
<div style="left:2px;top:782.35px;width:668px;height:1.2px;background:#121212;"></div>
<div style="left:8px;top:764.85px;width:15px;height:14px;background:#1a1a1a;border-radius:2px"></div>
<svg style="left:8px;top:766.85px" width="15" height="10"><use href="#eye" width="15" height="10"/></svg>
<div style="left:45.5px;top:764.6px;width:14.5px;height:14.5px;background:#121212;border-radius:2px"></div>
<div style="left:64.3px;top:764.6px;width:14.5px;height:14.5px;background:#121212;border-radius:2px"></div>
<svg style="left:92.5px;top:765.85px" width="8" height="12"><use href="#chev" width="8" height="12"/></svg>
<div style="left:108.2px;top:764.6px;width:14.6px;height:14.6px;background:#afaed8;"></div>
<span class="t" style="left:133.60px;top:764.96px;font-size:14.52px;line-height:14.52px;color:#c8c8c8;transform:scaleX(0.9579);transform-origin:0 0;">122</span>
<svg style="left:174px;top:764.35px" width="13" height="15"><use href="#img" width="13" height="15"/></svg>
<div style="left:190.7px;top:763.1px;width:139px;height:19px;background:#b8b8b8;"></div>
<span class="t" style="left:193.50px;top:765.01px;font-size:14.46px;line-height:14.46px;color:#1a1a1a;transform:scaleX(0.9579);transform-origin:0 0;">[image397.png]</span>
<div style="left:336.5px;top:764.6px;width:15.5px;height:14.5px;background:#121212;border-radius:2px"></div>
<svg style="left:337px;top:764.85px" width="15" height="14"><use href="#shy" width="15" height="14"/></svg>
<div style="left:374px;top:764.6px;width:15px;height:14.5px;background:#121212;border-radius:2px"></div>
<svg style="left:374px;top:764.85px" width="15" height="15"><use href="#qual" width="15" height="15"/></svg>
<div style="left:393px;top:764.6px;width:15px;height:14.5px;background:#121212;border-radius:2px"></div>
<svg style="left:393px;top:763.85px" width="15" height="15"><use href="#fx" width="15" height="15"/></svg>
<div style="left:430.3px;top:764.6px;width:14.5px;height:14.5px;background:#121212;border-radius:2px"></div>
<div style="left:448.8px;top:764.6px;width:14.5px;height:14.5px;background:#121212;border-radius:2px"></div>
<div style="left:467.8px;top:764.6px;width:14.5px;height:14.5px;background:#121212;border-radius:2px"></div>
<svg style="left:468px;top:764.35px" width="15" height="15"><use href="#cube" width="15" height="15"/></svg>
<svg style="left:511px;top:765.35px" width="15" height="15"><use href="#spir" width="15" height="15"/></svg>
<div style="left:534.7px;top:763.35px;width:111px;height:17.5px;background:#050505;border-radius:4px"></div>
<span class="t" style="left:544.20px;top:765.05px;font-size:14.41px;line-height:14.41px;color:#d4d4d4;transform:scaleX(0.9579);transform-origin:0 0;">None</span>
<svg style="left:623px;top:767.85px;" width="14" height="9" viewBox="0 0 14 9"><path d="M1.5 1.5 L7 7 L12.5 1.5" fill="none" stroke="#e8e8e8" stroke-width="2"/></svg>
<div style="left:672px;top:762.1px;width:126px;height:20.25px;background:#4a4a4a;"></div>
<div style="left:798px;top:762.1px;width:1049px;height:20.25px;background:linear-gradient(#a6a5cc,#9a99c2 70%,#8a89b2);border-left:2px solid #d0d0e8"></div>
<svg style="left:800px;top:762.1px;opacity:0.55" width="1047" height="20.25"><filter id="nz"><feTurbulence type="fractalNoise" baseFrequency="0.9" numOctaves="2" seed="3"/><feColorMatrix values="0 0 0 0 0.5  0 0 0 0 0.5  0 0 0 0 0.6  0 0 0 1.2 -0.35"/></filter><rect width="1047" height="20.25" filter="url(#nz)"/></svg>
<div style="left:798px;top:781.15px;width:1049px;height:1.2px;background:rgba(0,0,0,0.25);"></div>
<div style="left:798px;top:762.1px;width:1049px;height:1px;background:rgba(255,255,255,0.3);"></div>
<div style="left:672px;top:782.35px;width:1175px;height:1.25px;background:#1a1a1a;"></div>
<div style="left:2px;top:803.6px;width:668px;height:1.2px;background:#121212;"></div>
<div style="left:8px;top:786.1px;width:15px;height:14px;background:#1a1a1a;border-radius:2px"></div>
<svg style="left:8px;top:788.1px" width="15" height="10"><use href="#eye" width="15" height="10"/></svg>
<div style="left:45.5px;top:785.85px;width:14.5px;height:14.5px;background:#121212;border-radius:2px"></div>
<div style="left:64.3px;top:785.85px;width:14.5px;height:14.5px;background:#121212;border-radius:2px"></div>
<svg style="left:92.5px;top:787.1px" width="8" height="12"><use href="#chev" width="8" height="12"/></svg>
<div style="left:108.2px;top:785.85px;width:14.6px;height:14.6px;background:#afaed8;"></div>
<span class="t" style="left:133.60px;top:786.21px;font-size:14.52px;line-height:14.52px;color:#c8c8c8;transform:scaleX(0.9579);transform-origin:0 0;">123</span>
<svg style="left:174px;top:785.6px" width="13" height="15"><use href="#img" width="13" height="15"/></svg>
<span class="t" style="left:193.50px;top:786.26px;font-size:14.46px;line-height:14.46px;color:#c8c8c8;transform:scaleX(0.9579);transform-origin:0 0;">[image397.png]</span>
<div style="left:336.5px;top:785.85px;width:15.5px;height:14.5px;background:#121212;border-radius:2px"></div>
<svg style="left:337px;top:786.1px" width="15" height="14"><use href="#shy" width="15" height="14"/></svg>
<div style="left:374px;top:785.85px;width:15px;height:14.5px;background:#121212;border-radius:2px"></div>
<svg style="left:374px;top:786.1px" width="15" height="15"><use href="#qual" width="15" height="15"/></svg>
<div style="left:393px;top:785.85px;width:15px;height:14.5px;background:#121212;border-radius:2px"></div>
<svg style="left:393px;top:785.1px" width="15" height="15"><use href="#fx" width="15" height="15"/></svg>
<div style="left:430.3px;top:785.85px;width:14.5px;height:14.5px;background:#121212;border-radius:2px"></div>
<div style="left:448.8px;top:785.85px;width:14.5px;height:14.5px;background:#121212;border-radius:2px"></div>
<div style="left:467.8px;top:785.85px;width:14.5px;height:14.5px;background:#121212;border-radius:2px"></div>
<svg style="left:468px;top:785.6px" width="15" height="15"><use href="#cube" width="15" height="15"/></svg>
<svg style="left:511px;top:786.6px" width="15" height="15"><use href="#spir" width="15" height="15"/></svg>
<div style="left:534.7px;top:784.6px;width:111px;height:17.5px;background:#050505;border-radius:4px"></div>
<span class="t" style="left:544.20px;top:786.30px;font-size:14.41px;line-height:14.41px;color:#d4d4d4;transform:scaleX(0.9579);transform-origin:0 0;">None</span>
<svg style="left:623px;top:789.1px;" width="14" height="9" viewBox="0 0 14 9"><path d="M1.5 1.5 L7 7 L12.5 1.5" fill="none" stroke="#e8e8e8" stroke-width="2"/></svg>
<div style="left:798px;top:783.35px;width:1049px;height:20.25px;background:#6f6e80;"></div>
<div style="left:1301.5px;top:783.35px;width:83.5px;height:20.25px;background:rgba(255,255,255,0.09);"></div>
<div style="left:798px;top:802.4px;width:1049px;height:1.2px;background:rgba(0,0,0,0.25);"></div>
<div style="left:798px;top:783.35px;width:1049px;height:1px;background:rgba(255,255,255,0.07);"></div>
<div style="left:672px;top:803.6px;width:1175px;height:1.25px;background:#1a1a1a;"></div>
<div style="left:2px;top:824.85px;width:668px;height:1.2px;background:#121212;"></div>
<div style="left:8px;top:807.35px;width:15px;height:14px;background:#1a1a1a;border-radius:2px"></div>
<svg style="left:8px;top:809.35px" width="15" height="10"><use href="#eye" width="15" height="10"/></svg>
<div style="left:45.5px;top:807.1px;width:14.5px;height:14.5px;background:#121212;border-radius:2px"></div>
<div style="left:64.3px;top:807.1px;width:14.5px;height:14.5px;background:#121212;border-radius:2px"></div>
<svg style="left:92.5px;top:808.35px" width="8" height="12"><use href="#chev" width="8" height="12"/></svg>
<div style="left:108.2px;top:807.1px;width:14.6px;height:14.6px;background:#afaed8;"></div>
<span class="t" style="left:133.60px;top:807.46px;font-size:14.52px;line-height:14.52px;color:#c8c8c8;transform:scaleX(0.9579);transform-origin:0 0;">124</span>
<svg style="left:174px;top:806.85px" width="13" height="15"><use href="#img" width="13" height="15"/></svg>
<span class="t" style="left:193.50px;top:807.51px;font-size:14.46px;line-height:14.46px;color:#c8c8c8;transform:scaleX(0.9579);transform-origin:0 0;">[image397.png]</span>
<div style="left:336.5px;top:807.1px;width:15.5px;height:14.5px;background:#121212;border-radius:2px"></div>
<svg style="left:337px;top:807.35px" width="15" height="14"><use href="#shy" width="15" height="14"/></svg>
<div style="left:374px;top:807.1px;width:15px;height:14.5px;background:#121212;border-radius:2px"></div>
<svg style="left:374px;top:807.35px" width="15" height="15"><use href="#qual" width="15" height="15"/></svg>
<div style="left:393px;top:807.1px;width:15px;height:14.5px;background:#121212;border-radius:2px"></div>
<svg style="left:393px;top:806.35px" width="15" height="15"><use href="#fx" width="15" height="15"/></svg>
<div style="left:430.3px;top:807.1px;width:14.5px;height:14.5px;background:#121212;border-radius:2px"></div>
<div style="left:448.8px;top:807.1px;width:14.5px;height:14.5px;background:#121212;border-radius:2px"></div>
<div style="left:467.8px;top:807.1px;width:14.5px;height:14.5px;background:#121212;border-radius:2px"></div>
<svg style="left:468px;top:806.85px" width="15" height="15"><use href="#cube" width="15" height="15"/></svg>
<svg style="left:511px;top:807.85px" width="15" height="15"><use href="#spir" width="15" height="15"/></svg>
<div style="left:534.7px;top:805.85px;width:111px;height:17.5px;background:#050505;border-radius:4px"></div>
<span class="t" style="left:544.20px;top:807.55px;font-size:14.41px;line-height:14.41px;color:#d4d4d4;transform:scaleX(0.9579);transform-origin:0 0;">None</span>
<svg style="left:623px;top:810.35px;" width="14" height="9" viewBox="0 0 14 9"><path d="M1.5 1.5 L7 7 L12.5 1.5" fill="none" stroke="#e8e8e8" stroke-width="2"/></svg>
<div style="left:798px;top:804.6px;width:1049px;height:20.25px;background:#6f6e80;"></div>
<div style="left:1301.5px;top:804.6px;width:83.5px;height:20.25px;background:rgba(255,255,255,0.09);"></div>
<div style="left:798px;top:823.65px;width:1049px;height:1.2px;background:rgba(0,0,0,0.25);"></div>
<div style="left:798px;top:804.6px;width:1049px;height:1px;background:rgba(255,255,255,0.07);"></div>
<div style="left:672px;top:824.85px;width:1175px;height:1.25px;background:#1a1a1a;"></div>
<div style="left:2px;top:846.1px;width:668px;height:1.2px;background:#121212;"></div>
<div style="left:8px;top:828.6px;width:15px;height:14px;background:#1a1a1a;border-radius:2px"></div>
<svg style="left:8px;top:830.6px" width="15" height="10"><use href="#eye" width="15" height="10"/></svg>
<div style="left:45.5px;top:828.35px;width:14.5px;height:14.5px;background:#121212;border-radius:2px"></div>
<div style="left:64.3px;top:828.35px;width:14.5px;height:14.5px;background:#121212;border-radius:2px"></div>
<svg style="left:92.5px;top:829.6px" width="8" height="12"><use href="#chev" width="8" height="12"/></svg>
<div style="left:108.2px;top:828.35px;width:14.6px;height:14.6px;background:#afaed8;"></div>
<span class="t" style="left:133.60px;top:828.71px;font-size:14.52px;line-height:14.52px;color:#c8c8c8;transform:scaleX(0.9579);transform-origin:0 0;">125</span>
<svg style="left:174px;top:828.1px" width="13" height="15"><use href="#img" width="13" height="15"/></svg>
<span class="t" style="left:193.50px;top:828.76px;font-size:14.46px;line-height:14.46px;color:#c8c8c8;transform:scaleX(0.9579);transform-origin:0 0;">[image397.png]</span>
<div style="left:336.5px;top:828.35px;width:15.5px;height:14.5px;background:#121212;border-radius:2px"></div>
<svg style="left:337px;top:828.6px" width="15" height="14"><use href="#shy" width="15" height="14"/></svg>
<div style="left:374px;top:828.35px;width:15px;height:14.5px;background:#121212;border-radius:2px"></div>
<svg style="left:374px;top:828.6px" width="15" height="15"><use href="#qual" width="15" height="15"/></svg>
<div style="left:393px;top:828.35px;width:15px;height:14.5px;background:#121212;border-radius:2px"></div>
<svg style="left:393px;top:827.6px" width="15" height="15"><use href="#fx" width="15" height="15"/></svg>
<div style="left:430.3px;top:828.35px;width:14.5px;height:14.5px;background:#121212;border-radius:2px"></div>
<div style="left:448.8px;top:828.35px;width:14.5px;height:14.5px;background:#121212;border-radius:2px"></div>
<div style="left:467.8px;top:828.35px;width:14.5px;height:14.5px;background:#121212;border-radius:2px"></div>
<svg style="left:468px;top:828.1px" width="15" height="15"><use href="#cube" width="15" height="15"/></svg>
<svg style="left:511px;top:829.1px" width="15" height="15"><use href="#spir" width="15" height="15"/></svg>
<div style="left:534.7px;top:827.1px;width:111px;height:17.5px;background:#050505;border-radius:4px"></div>
<span class="t" style="left:544.20px;top:828.80px;font-size:14.41px;line-height:14.41px;color:#d4d4d4;transform:scaleX(0.9579);transform-origin:0 0;">None</span>
<svg style="left:623px;top:831.6px;" width="14" height="9" viewBox="0 0 14 9"><path d="M1.5 1.5 L7 7 L12.5 1.5" fill="none" stroke="#e8e8e8" stroke-width="2"/></svg>
<div style="left:798px;top:825.85px;width:1049px;height:20.25px;background:#6f6e80;"></div>
<div style="left:1301.5px;top:825.85px;width:83.5px;height:20.25px;background:rgba(255,255,255,0.09);"></div>
<div style="left:798px;top:844.9px;width:1049px;height:1.2px;background:rgba(0,0,0,0.25);"></div>
<div style="left:798px;top:825.85px;width:1049px;height:1px;background:rgba(255,255,255,0.07);"></div>
<div style="left:672px;top:846.1px;width:1175px;height:1.25px;background:#1a1a1a;"></div>
<div style="left:2px;top:867.35px;width:668px;height:1.2px;background:#121212;"></div>
<div style="left:8px;top:849.85px;width:15px;height:14px;background:#1a1a1a;border-radius:2px"></div>
<svg style="left:8px;top:851.85px" width="15" height="10"><use href="#eye" width="15" height="10"/></svg>
<div style="left:45.5px;top:849.6px;width:14.5px;height:14.5px;background:#121212;border-radius:2px"></div>
<div style="left:64.3px;top:849.6px;width:14.5px;height:14.5px;background:#121212;border-radius:2px"></div>
<svg style="left:92.5px;top:850.85px" width="8" height="12"><use href="#chev" width="8" height="12"/></svg>
<div style="left:108.2px;top:849.6px;width:14.6px;height:14.6px;background:#afaed8;"></div>
<span class="t" style="left:133.60px;top:849.96px;font-size:14.52px;line-height:14.52px;color:#c8c8c8;transform:scaleX(0.9579);transform-origin:0 0;">126</span>
<svg style="left:174px;top:849.35px" width="13" height="15"><use href="#img" width="13" height="15"/></svg>
<span class="t" style="left:193.50px;top:850.01px;font-size:14.46px;line-height:14.46px;color:#c8c8c8;transform:scaleX(0.9579);transform-origin:0 0;">[image397.png]</span>
<div style="left:336.5px;top:849.6px;width:15.5px;height:14.5px;background:#121212;border-radius:2px"></div>
<svg style="left:337px;top:849.85px" width="15" height="14"><use href="#shy" width="15" height="14"/></svg>
<div style="left:374px;top:849.6px;width:15px;height:14.5px;background:#121212;border-radius:2px"></div>
<svg style="left:374px;top:849.85px" width="15" height="15"><use href="#qual" width="15" height="15"/></svg>
<div style="left:393px;top:849.6px;width:15px;height:14.5px;background:#121212;border-radius:2px"></div>
<svg style="left:393px;top:848.85px" width="15" height="15"><use href="#fx" width="15" height="15"/></svg>
<div style="left:430.3px;top:849.6px;width:14.5px;height:14.5px;background:#121212;border-radius:2px"></div>
<div style="left:448.8px;top:849.6px;width:14.5px;height:14.5px;background:#121212;border-radius:2px"></div>
<div style="left:467.8px;top:849.6px;width:14.5px;height:14.5px;background:#121212;border-radius:2px"></div>
<svg style="left:468px;top:849.35px" width="15" height="15"><use href="#cube" width="15" height="15"/></svg>
<svg style="left:511px;top:850.35px" width="15" height="15"><use href="#spir" width="15" height="15"/></svg>
<div style="left:534.7px;top:848.35px;width:111px;height:17.5px;background:#050505;border-radius:4px"></div>
<span class="t" style="left:544.20px;top:850.05px;font-size:14.41px;line-height:14.41px;color:#d4d4d4;transform:scaleX(0.9579);transform-origin:0 0;">None</span>
<svg style="left:623px;top:852.85px;" width="14" height="9" viewBox="0 0 14 9"><path d="M1.5 1.5 L7 7 L12.5 1.5" fill="none" stroke="#e8e8e8" stroke-width="2"/></svg>
<div style="left:798px;top:847.1px;width:1049px;height:20.25px;background:#6f6e80;"></div>
<div style="left:1301.5px;top:847.1px;width:83.5px;height:20.25px;background:rgba(255,255,255,0.09);"></div>
<div style="left:798px;top:866.15px;width:1049px;height:1.2px;background:rgba(0,0,0,0.25);"></div>
<div style="left:798px;top:847.1px;width:1049px;height:1px;background:rgba(255,255,255,0.07);"></div>
<div style="left:672px;top:867.35px;width:1175px;height:1.25px;background:#1a1a1a;"></div>
<div style="left:2px;top:888.6px;width:668px;height:1.2px;background:#121212;"></div>
<div style="left:8px;top:871.1px;width:15px;height:14px;background:#1a1a1a;border-radius:2px"></div>
<svg style="left:8px;top:873.1px" width="15" height="10"><use href="#eye" width="15" height="10"/></svg>
<div style="left:45.5px;top:870.85px;width:14.5px;height:14.5px;background:#121212;border-radius:2px"></div>
<div style="left:64.3px;top:870.85px;width:14.5px;height:14.5px;background:#121212;border-radius:2px"></div>
<svg style="left:92.5px;top:872.1px" width="8" height="12"><use href="#chev" width="8" height="12"/></svg>
<div style="left:108.2px;top:870.85px;width:14.6px;height:14.6px;background:#afaed8;"></div>
<span class="t" style="left:133.60px;top:871.21px;font-size:14.52px;line-height:14.52px;color:#c8c8c8;transform:scaleX(0.9579);transform-origin:0 0;">127</span>
<svg style="left:174px;top:870.6px" width="13" height="15"><use href="#img" width="13" height="15"/></svg>
<span class="t" style="left:193.50px;top:871.26px;font-size:14.46px;line-height:14.46px;color:#c8c8c8;transform:scaleX(0.9579);transform-origin:0 0;">[image397.png]</span>
<div style="left:336.5px;top:870.85px;width:15.5px;height:14.5px;background:#121212;border-radius:2px"></div>
<svg style="left:337px;top:871.1px" width="15" height="14"><use href="#shy" width="15" height="14"/></svg>
<div style="left:374px;top:870.85px;width:15px;height:14.5px;background:#121212;border-radius:2px"></div>
<svg style="left:374px;top:871.1px" width="15" height="15"><use href="#qual" width="15" height="15"/></svg>
<div style="left:393px;top:870.85px;width:15px;height:14.5px;background:#121212;border-radius:2px"></div>
<svg style="left:393px;top:870.1px" width="15" height="15"><use href="#fx" width="15" height="15"/></svg>
<div style="left:430.3px;top:870.85px;width:14.5px;height:14.5px;background:#121212;border-radius:2px"></div>
<div style="left:448.8px;top:870.85px;width:14.5px;height:14.5px;background:#121212;border-radius:2px"></div>
<div style="left:467.8px;top:870.85px;width:14.5px;height:14.5px;background:#121212;border-radius:2px"></div>
<svg style="left:468px;top:870.6px" width="15" height="15"><use href="#cube" width="15" height="15"/></svg>
<svg style="left:511px;top:871.6px" width="15" height="15"><use href="#spir" width="15" height="15"/></svg>
<div style="left:534.7px;top:869.6px;width:111px;height:17.5px;background:#050505;border-radius:4px"></div>
<span class="t" style="left:544.20px;top:871.30px;font-size:14.41px;line-height:14.41px;color:#d4d4d4;transform:scaleX(0.9579);transform-origin:0 0;">None</span>
<svg style="left:623px;top:874.1px;" width="14" height="9" viewBox="0 0 14 9"><path d="M1.5 1.5 L7 7 L12.5 1.5" fill="none" stroke="#e8e8e8" stroke-width="2"/></svg>
<div style="left:798px;top:868.35px;width:1049px;height:20.25px;background:#6f6e80;"></div>
<div style="left:1301.5px;top:868.35px;width:83.5px;height:20.25px;background:rgba(255,255,255,0.09);"></div>
<div style="left:798px;top:887.4px;width:1049px;height:1.2px;background:rgba(0,0,0,0.25);"></div>
<div style="left:798px;top:868.35px;width:1049px;height:1px;background:rgba(255,255,255,0.07);"></div>
<div style="left:672px;top:888.6px;width:1175px;height:1.25px;background:#1a1a1a;"></div>
<div style="left:2px;top:909.85px;width:668px;height:1.2px;background:#121212;"></div>
<div style="left:8px;top:892.35px;width:15px;height:14px;background:#1a1a1a;border-radius:2px"></div>
<svg style="left:8px;top:894.35px" width="15" height="10"><use href="#eye" width="15" height="10"/></svg>
<div style="left:45.5px;top:892.1px;width:14.5px;height:14.5px;background:#121212;border-radius:2px"></div>
<div style="left:64.3px;top:892.1px;width:14.5px;height:14.5px;background:#121212;border-radius:2px"></div>
<svg style="left:92.5px;top:893.35px" width="8" height="12"><use href="#chev" width="8" height="12"/></svg>
<div style="left:108.2px;top:892.1px;width:14.6px;height:14.6px;background:#c03a3a;"></div>
<span class="t" style="left:133.60px;top:892.46px;font-size:14.52px;line-height:14.52px;color:#c8c8c8;transform:scaleX(0.9579);transform-origin:0 0;">128</span>
<svg style="left:173px;top:891.85px" width="15" height="15"><use href="#ttl" width="15" height="15"/></svg>
<span class="t" style="left:193.50px;top:892.69px;font-size:14.25px;line-height:14.25px;color:#c8c8c8;transform:scaleX(0.9579);transform-origin:0 0;">DO NOTHING</span>
<div style="left:336.5px;top:892.1px;width:15.5px;height:14.5px;background:#121212;border-radius:2px"></div>
<svg style="left:337px;top:892.35px" width="15" height="14"><use href="#shy" width="15" height="14"/></svg>
<div style="left:355.3px;top:892.1px;width:15.5px;height:14.5px;background:#121212;border-radius:2px"></div>
<svg style="left:355.5px;top:892.35px" width="15" height="15"><use href="#sun" width="15" height="15"/></svg>
<div style="left:374px;top:892.1px;width:15px;height:14.5px;background:#121212;border-radius:2px"></div>
<svg style="left:374px;top:892.35px" width="15" height="15"><use href="#qual" width="15" height="15"/></svg>
<div style="left:393px;top:892.1px;width:15px;height:14.5px;background:#121212;border-radius:2px"></div>
<svg style="left:393px;top:891.35px" width="15" height="15"><use href="#fx" width="15" height="15"/></svg>
<div style="left:430.3px;top:892.1px;width:14.5px;height:14.5px;background:#121212;border-radius:2px"></div>
<div style="left:448.8px;top:892.1px;width:14.5px;height:14.5px;background:#121212;border-radius:2px"></div>
<div style="left:467.8px;top:892.1px;width:14.5px;height:14.5px;background:#121212;border-radius:2px"></div>
<svg style="left:468px;top:891.85px" width="15" height="15"><use href="#cube" width="15" height="15"/></svg>
<svg style="left:511px;top:892.85px" width="15" height="15"><use href="#spir" width="15" height="15"/></svg>
<div style="left:534.7px;top:890.85px;width:111px;height:17.5px;background:#050505;border-radius:4px"></div>
<span class="t" style="left:544.20px;top:892.55px;font-size:14.41px;line-height:14.41px;color:#d4d4d4;transform:scaleX(0.9579);transform-origin:0 0;">None</span>
<svg style="left:623px;top:895.35px;" width="14" height="9" viewBox="0 0 14 9"><path d="M1.5 1.5 L7 7 L12.5 1.5" fill="none" stroke="#e8e8e8" stroke-width="2"/></svg>
<div style="left:1301.5px;top:889.6px;width:83.5px;height:20.25px;background:rgba(255,255,255,0.09);"></div>
<div style="left:672px;top:909.85px;width:1175px;height:1.25px;background:#1a1a1a;"></div>
<div style="left:2px;top:931.1px;width:668px;height:1.2px;background:#121212;"></div>
<div style="left:8px;top:913.6px;width:15px;height:14px;background:#1a1a1a;border-radius:2px"></div>
<svg style="left:8px;top:915.6px" width="15" height="10"><use href="#eye" width="15" height="10"/></svg>
<div style="left:45.5px;top:913.35px;width:14.5px;height:14.5px;background:#121212;border-radius:2px"></div>
<div style="left:64.3px;top:913.35px;width:14.5px;height:14.5px;background:#121212;border-radius:2px"></div>
<svg style="left:92.5px;top:914.6px" width="8" height="12"><use href="#chev" width="8" height="12"/></svg>
<div style="left:108.2px;top:913.35px;width:14.6px;height:14.6px;background:#c03a3a;"></div>
<span class="t" style="left:133.60px;top:913.71px;font-size:14.52px;line-height:14.52px;color:#c8c8c8;transform:scaleX(0.9579);transform-origin:0 0;">129</span>
<svg style="left:173px;top:913.1px" width="15" height="15"><use href="#ttl" width="15" height="15"/></svg>
<span class="t" style="left:193.50px;top:914.39px;font-size:13.71px;line-height:13.71px;color:#c8c8c8;transform:scaleX(0.9579);transform-origin:0 0;">Doing n…, no chance.</span>
<div style="left:336.5px;top:913.35px;width:15.5px;height:14.5px;background:#121212;border-radius:2px"></div>
<svg style="left:337px;top:913.6px" width="15" height="14"><use href="#shy" width="15" height="14"/></svg>
<div style="left:355.3px;top:913.35px;width:15.5px;height:14.5px;background:#121212;border-radius:2px"></div>
<svg style="left:355.5px;top:913.6px" width="15" height="15"><use href="#sun" width="15" height="15"/></svg>
<div style="left:374px;top:913.35px;width:15px;height:14.5px;background:#121212;border-radius:2px"></div>
<svg style="left:374px;top:913.6px" width="15" height="15"><use href="#qual" width="15" height="15"/></svg>
<div style="left:430.3px;top:913.35px;width:14.5px;height:14.5px;background:#121212;border-radius:2px"></div>
<div style="left:448.8px;top:913.35px;width:14.5px;height:14.5px;background:#121212;border-radius:2px"></div>
<div style="left:467.8px;top:913.35px;width:14.5px;height:14.5px;background:#121212;border-radius:2px"></div>
<svg style="left:468px;top:913.1px" width="15" height="15"><use href="#cube" width="15" height="15"/></svg>
<svg style="left:511px;top:914.1px" width="15" height="15"><use href="#spir" width="15" height="15"/></svg>
<div style="left:534.7px;top:912.1px;width:111px;height:17.5px;background:#050505;border-radius:4px"></div>
<span class="t" style="left:544.20px;top:913.80px;font-size:14.41px;line-height:14.41px;color:#d4d4d4;transform:scaleX(0.9579);transform-origin:0 0;">None</span>
<svg style="left:623px;top:916.6px;" width="14" height="9" viewBox="0 0 14 9"><path d="M1.5 1.5 L7 7 L12.5 1.5" fill="none" stroke="#e8e8e8" stroke-width="2"/></svg>
<div style="left:1301.5px;top:910.85px;width:83.5px;height:20.25px;background:rgba(255,255,255,0.09);"></div>
<div style="left:672px;top:931.1px;width:1175px;height:1.25px;background:#1a1a1a;"></div>
<div style="left:467.5px;top:533px;width:1px;height:398px;background:repeating-linear-gradient(#bbb 0 1px,transparent 1px 3px);"></div>
<div style="left:482.2px;top:533px;width:1px;height:398px;background:repeating-linear-gradient(#bbb 0 1px,transparent 1px 3px);"></div>
<div style="left:670px;top:509px;width:2px;height:422px;background:#111;"></div>
<div style="left:1301.5px;top:528px;width:82.7px;height:4px;background:#1fc22a;"></div>
<span class="t" style="left:1290.90px;top:487.43px;font-size:13.55px;line-height:13.55px;color:#c8c8c8;transform:scaleX(0.9579);transform-origin:0 0;">28f</span>
<div style="left:1301px;top:489px;width:1.2px;height:442px;background:#4a9cf7;"></div>
<svg style="left:1294px;top:489px;" width="16" height="19" viewBox="0 0 16 19"><path d="M0.5 0.5 L15.5 0.5 L15.5 10 L8 18 L0.5 10 Z" fill="#3d97f2"/><path d="M7 11 L9 11 L8 13Z" fill="#111"/></svg>
<div style="left:1847px;top:509px;width:21px;height:422px;background:#1f1f1f;"></div>
<svg style="left:1850px;top:512px;" width="17" height="18" viewBox="0 0 17 18"><path d="M1 1 L16 1 L16 12 L8.5 17 L1 12 Z" fill="#bdbdbd"/></svg>
<svg style="left:1848px;top:536px;" width="19" height="18" viewBox="0 0 19 18"><path d="M1 12 L8 4 L10 6" fill="none" stroke="#b8b8b8" stroke-width="1.5"/><rect x="9" y="6" width="9" height="7" fill="#b8b8b8"/><circle cx="7" cy="13" r="3.5" fill="#1f1f1f" stroke="#b8b8b8" stroke-width="1.5"/></svg>
<div style="left:1847px;top:856px;width:21px;height:51px;background:#4d4d4d;"></div>
<div style="left:2px;top:931px;width:1866px;height:12px;background:#1f1f1f;"></div>
<div style="left:2px;top:931px;width:1866px;height:12px;overflow:hidden"><span class="t" style="left:129.7px;top:4px;font-size:14.52px;line-height:14.52px;transform:scaleX(0.93);transform-origin:0 0;color:#c8c8c8">Frame Render Time  <span style="position:static;color:#2ec49c">0ms</span></span><span class="t" style="left:341px;top:4px;font-size:14.52px;line-height:14.52px;transform:scaleX(0.93);transform-origin:0 0;color:#c8c8c8">Toggle Switches / Modes</span></div>
<svg style="left:8px;top:934px;" width="100" height="9" viewBox="0 0 100 9"><rect x="4" y="3" width="16" height="8" rx="2" fill="#3a3a3a"/><circle cx="40" cy="8" r="5" fill="none" stroke="#aaa" stroke-width="1.5"/><path d="M58 9 L61 3 L64 9 M68 9 L71 3" stroke="#aaa" stroke-width="1.5" fill="none"/><circle cx="86" cy="8" r="4" fill="#aaa"/></svg>
<div style="left:672px;top:931px;width:1px;height:12px;background:#111;"></div>
<svg style="left:680px;top:933px;" width="120" height="10" viewBox="0 0 120 10"><path d="M2 9 L6 5 L10 9" fill="none" stroke="#aaa" stroke-width="1.5"/><rect x="25" y="7" width="50" height="1.5" fill="#666"/><circle cx="82" cy="8" r="4.5" fill="none" stroke="#bbb" stroke-width="1.6"/><path d="M106 9 L110 4 L114 9" fill="none" stroke="#aaa" stroke-width="1.5"/></svg>
<div style="left:883px;top:933px;width:31px;height:10px;background:#4a4a4a;"></div>
<div style="left:2px;top:509px;width:668px;height:23.5px;background:#1f1f1f;"></div>
<div style="left:2px;top:508px;width:668px;height:1.5px;background:#141414;"></div>
<svg style="left:9px;top:516px" width="15" height="10"><use href="#eye" width="15" height="10"/></svg>
<svg style="left:27px;top:514px" width="17" height="15"><use href="#spk" width="17" height="15"/></svg>
<svg style="left:49px;top:516px;" width="10" height="10" viewBox="0 0 10 10"><circle cx="5" cy="5" r="4.5" fill="#c4c4c4"/></svg>
<svg style="left:66px;top:514px;" width="13" height="15" viewBox="0 0 13 15"><path d="M3 7 L3 4.5 C3 2 4.5 0.8 6.5 0.8 C8.5 0.8 10 2 10 4.5 L10 7" fill="none" stroke="#c4c4c4" stroke-width="1.7"/><rect x="1" y="6.5" width="11" height="8" rx="0.8" fill="#c4c4c4"/><rect x="6" y="9" width="1.4" height="3.5" fill="#1f1f1f"/></svg>
<div style="left:85px;top:514px;width:2px;height:12px;background:#121212;"></div>
<svg style="left:104px;top:514px;" width="16" height="15" viewBox="0 0 16 15"><path d="M1 1 L7 1 L15 9 L9 15 L1 7 Z" fill="#c4c4c4"/><circle cx="4" cy="4" r="1.1" fill="#1f1f1f"/></svg>
<div style="left:124.5px;top:514px;width:2px;height:12px;background:#121212;"></div>
<span class="t" style="left:132.20px;top:516.43px;font-size:12.37px;line-height:12.37px;color:#c4c4c4;transform:scaleX(0.9579);transform-origin:0 0;">#</span>
<div style="left:166px;top:514px;width:2px;height:12px;background:#121212;"></div>
<span class="t" style="left:173.70px;top:516.61px;font-size:12.15px;line-height:12.15px;color:#c8c8c8;transform:scaleX(0.9579);transform-origin:0 0;">Layer Name</span>
<div style="left:328px;top:514px;width:2px;height:12px;background:#121212;"></div>
<svg style="left:336.5px;top:513.5px" width="16" height="14"><use href="#shy" width="16" height="14"/></svg>
<svg style="left:357px;top:514px;" width="14" height="14" viewBox="0 0 14 14"><circle cx="7" cy="7" r="2.4" fill="none" stroke="#c4c4c4" stroke-width="1.3"/><path d="M7 0.5 L7 3.5 M7 10.5 L7 13.5 M0.5 7 L3.5 7 M10.5 7 L13.5 7 M2.4 2.4 L4.4 4.4 M9.6 9.6 L11.6 11.6 M2.4 11.6 L4.4 9.6 M9.6 4.4 L11.6 2.4" stroke="#c4c4c4" stroke-width="1.1"/></svg>
<svg style="left:374px;top:514px;" width="15" height="15" viewBox="0 0 15 15"><path d="M1 1 L14 14" stroke="#c4c4c4" stroke-width="1.5" stroke-dasharray="2 1.5"/></svg>
<svg style="left:393px;top:513px" width="15" height="15"><use href="#fx" width="15" height="15"/></svg>
<svg style="left:411px;top:514px;" width="17" height="16" viewBox="0 0 17 16"><path d="M1 3 L1 15 L13 15" fill="none" stroke="#b8b8b8" stroke-width="1.2"/><rect x="3" y="0.5" width="13.5" height="13" rx="1" fill="#c4c4c4"/><path d="M5 1 L5 13 M14.5 1 L14.5 13" stroke="#1f1f1f" stroke-width="1.2" stroke-dasharray="1.5 1.5"/><rect x="7.5" y="6" width="4.5" height="2" fill="#1f1f1f"/></svg>
<svg style="left:430px;top:513px;" width="17" height="17" viewBox="0 0 17 17"><circle cx="6.5" cy="11.5" r="5.5" fill="none" stroke="#a8a8a8" stroke-width="1.1"/><circle cx="8.5" cy="9" r="5.5" fill="#1f1f1f" stroke="#b8b8b8" stroke-width="1.1"/><circle cx="10.5" cy="6.5" r="6" fill="#8a8a8a" stroke="#c4c4c4" stroke-width="1"/></svg>
<svg style="left:449px;top:514px;" width="15" height="15" viewBox="0 0 15 15"><circle cx="7.5" cy="7.5" r="6.3" fill="none" stroke="#c4c4c4" stroke-width="1.3"/><path d="M12 3 A6.3 6.3 0 0 1 3 12 Z" fill="#c4c4c4"/></svg>
<svg style="left:468px;top:514px" width="15" height="15"><use href="#cube" width="15" height="15"/></svg>
<div style="left:500px;top:514px;width:2px;height:12px;background:#121212;"></div>
<span class="t" style="left:511.20px;top:516.43px;font-size:12.37px;line-height:12.37px;color:#c8c8c8;transform:scaleX(0.9579);transform-origin:0 0;">Parent &amp; Link</span>
<div style="left:650px;top:514px;width:2px;height:12px;background:#121212;"></div>
</body></html>
